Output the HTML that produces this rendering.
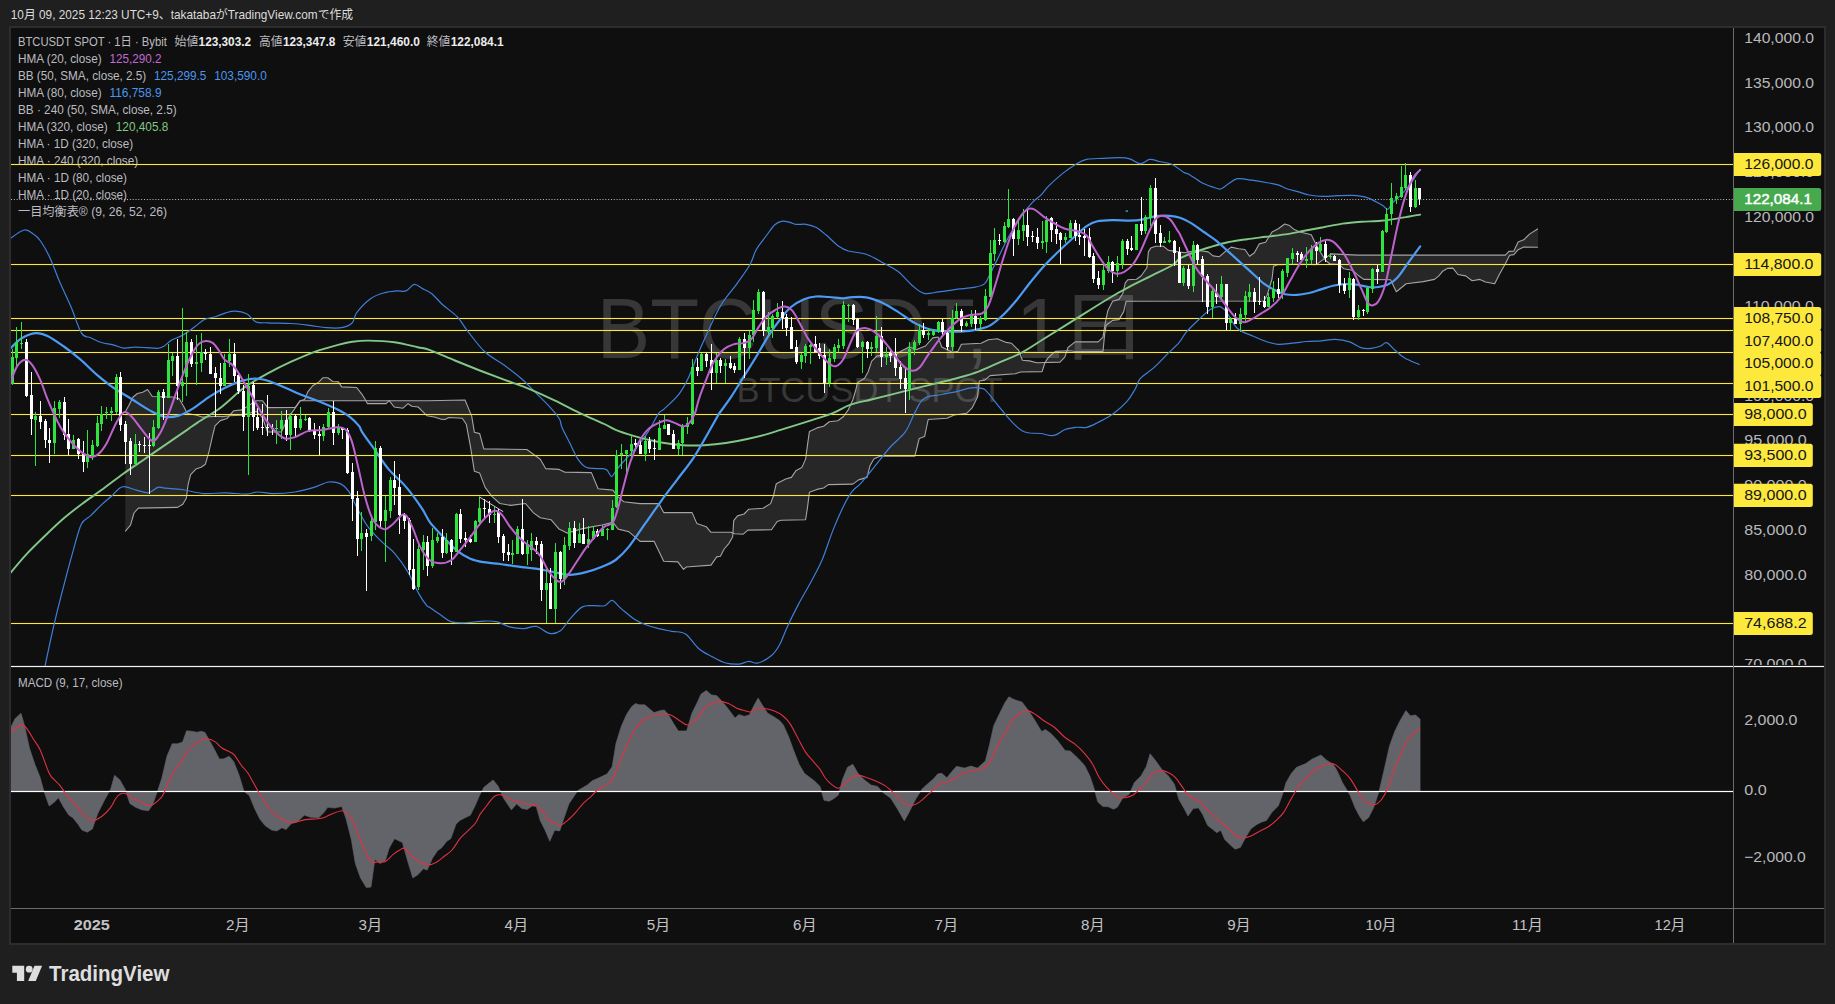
<!DOCTYPE html>
<html lang="ja"><head><meta charset="utf-8"><title>BTCUSDT SPOT 1日 Bybit</title>
<style>
html,body{margin:0;padding:0;background:#1f1f1f;}
body{width:1835px;height:1004px;overflow:hidden;font-family:"Liberation Sans","Noto Sans CJK JP",sans-serif;}
svg{display:block}
text{font-family:"Liberation Sans","Noto Sans CJK JP",sans-serif;}
</style></head><body>
<svg width="1835" height="1004" viewBox="0 0 1835 1004">
<rect width="1835" height="1004" fill="#1f1f1f"/>
<rect x="9" y="26" width="1817" height="919" fill="#2d2d2d"/>
<rect x="11" y="28" width="1813" height="915" fill="#0f0f0f"/>
<defs>
<clipPath id="cpMain"><rect x="11" y="28" width="1722.5" height="638.0"/></clipPath>
<clipPath id="cpAxis"><rect x="1733.5" y="28" width="90.5" height="637.0"/></clipPath>
<clipPath id="cpMacd"><rect x="11" y="667.0" width="1722.5" height="241.5"/></clipPath>
</defs>

<text x="10.8" y="19.0" font-size="12.4" fill="#dcdcdc" textLength="342.3" lengthAdjust="spacingAndGlyphs" >10月 09, 2025 12:23 UTC+9、takatabaがTradingView.comで作成</text>
<g clip-path="url(#cpMain)">
<text x="596.8" y="358.0" font-size="86" fill="#373737" textLength="391.5" lengthAdjust="spacingAndGlyphs" >BTCUSDT,</text>
<text x="1015.5" y="358.0" font-size="86" fill="#373737" >1</text>
<text transform="translate(1058.9,354.3) scale(1.17,1)" font-size="76" fill="#373737">日</text>
<text x="736.5" y="401.8" font-size="34.3" fill="#373737" textLength="266.0" lengthAdjust="spacingAndGlyphs" >BTCUSDT SPOT</text>
<path d="M125.2,411.9L128.7,405.7L133.1,397.0L137.4,393.5L142.7,392.3L147.6,389.5L152.3,396.5L172.3,397.0L179.3,398.8L183.7,406.6L187.1,413.2L196.7,415.3L202.0,417.1L217.7,416.2L222.5,416.6L230.0,415.7L241.9,415.1L256.4,411.4L262.6,417.6L265.1,425.1L267.6,432.0L281.4,432.0L285.2,423.9L290.2,415.1L296.5,406.3L300.2,400.7L304.6,399.5L307.8,391.9L312.8,385.7L319.0,381.9L322.8,377.8L327.8,377.8L332.8,381.5L338.5,381.9L341.6,386.9L356.6,387.5L361.6,393.8L366.0,400.7L367.3,403.6L386.1,403.6L389.2,400.7L394.2,407.0L403.0,408.2L408.0,403.6L411.8,406.3L418.1,407.0L421.8,410.7L426.8,415.7L434.3,417.0L440.6,419.1L445.0,419.5L448.8,417.5L462.3,418.3L466.3,424.2L470.3,445.7L474.4,471.3L479.7,473.1L485.1,487.4L491.9,496.3L499.9,503.5L510.7,505.4L525.5,503.5L533.5,512.9L540.3,517.8L551.0,519.7L559.1,529.1L567.1,533.1L580.6,529.1L591.4,526.9L602.1,525.0L612.9,522.4L618.2,529.1L629.0,531.8L638.4,539.8L640.0,541.4L654.2,541.4L663.7,561.3L677.9,561.9L683.5,569.4L686.4,567.0L711.0,565.1L716.7,556.9L720.4,556.2L724.2,549.0L729.0,543.3L732.7,536.7L733.7,520.6L737.5,515.9L744.1,514.0L748.8,509.2L763.0,508.3L770.6,503.6L773.4,496.0L776.3,483.7L785.7,479.0L791.4,477.4L796.2,470.4L801.8,467.6L805.6,459.1L807.5,444.9L809.4,431.6L817.0,427.9L823.6,426.3L829.3,421.8L837.8,420.7L843.5,416.5L848.2,409.9L852.9,399.5L855.8,390.0L857.4,382.8L864.6,378.3L868.1,372.0L871.7,361.2L877.1,355.9L884.3,355.0L896.8,354.1L902.2,350.5L909.4,346.9L916.6,349.6L925.5,346.0L932.7,337.9L938.1,337.0L941.7,346.9L952.4,352.3L957.8,351.4L961.4,344.2L981.1,343.3L988.3,339.7L997.3,338.8L1006.2,342.4L1011.6,343.3L1018.8,350.5L1022.4,360.3L1029.5,360.9L1036.7,362.7L1060.0,362.1L1064.8,357.1L1068.0,347.5L1075.1,341.9L1098.2,341.9L1103.0,337.1L1105.4,322.0L1107.8,310.8L1112.6,301.3L1119.0,299.4L1122.9,293.3L1125.3,282.9L1127.7,279.8L1136.5,279.3L1141.3,275.8L1146.9,267.8L1148.4,251.9L1150.8,247.9L1155.6,246.3L1163.6,246.3L1168.4,250.3L1173.9,251.1L1184.3,252.7L1197.1,250.3L1208.2,251.9L1213.0,255.9L1219.4,256.7L1225.7,251.1L1231.3,247.1L1238.5,248.7L1244.9,249.5L1249.6,256.3L1254.4,252.7L1259.2,243.9L1265.6,242.3L1272.0,232.0L1278.3,228.8L1284.7,224.0L1289.5,225.6L1294.3,229.6L1300.0,232.0L1311.3,234.8L1314.8,241.9L1319.8,251.1L1325.4,260.3L1329.7,263.8L1339.6,264.6L1343.8,268.8L1352.3,270.2L1358.0,275.2L1363.7,279.4L1390.6,279.7L1396.3,291.8L1406.2,283.7L1423.2,281.6L1434.5,279.4L1438.8,275.9L1443.0,270.9L1447.3,268.4L1452.9,268.1L1457.9,274.5L1465.7,275.9L1472.1,280.8L1479.9,279.4L1485.5,282.0L1494.7,283.7L1499.7,273.8L1505.4,263.8L1509.6,255.3L1513.9,254.6L1518.1,249.7L1523.8,247.1L1538.0,247.3L1538.0,228.8L1529.5,234.1L1523.8,239.8L1518.1,241.9L1513.9,251.1L1508.9,251.4L1505.4,255.1L1358.0,255.1L1331.1,253.9L1316.2,264.6L1300.0,264.3L1278.3,264.6L1273.5,266.2L1272.0,279.0L1267.2,294.9L1264.0,301.0L1126.1,301.3L1123.7,311.6L1119.0,319.6L1112.6,320.4L1106.2,325.2L1104.6,334.7L1103.0,351.5L1075.9,351.5L1069.0,350.8L1055.5,351.4L1051.0,355.0L1047.5,358.6L1044.8,363.0L1042.1,371.6L1020.6,372.0L1015.2,373.8L990.1,375.6L984.7,380.1L979.3,381.0L977.5,397.1L972.1,407.9L966.8,413.2L954.2,415.0L947.0,418.3L928.2,419.5L924.6,436.6L919.2,438.4L917.5,445.5L914.8,456.3L880.0,456.2L873.8,459.1L870.0,465.7L867.1,477.4L858.6,479.9L852.9,484.1L828.3,484.6L823.6,488.0L817.0,489.4L809.4,492.2L807.5,507.4L805.6,519.7L781.0,520.2L777.2,521.5L771.5,529.7L747.9,530.1L743.2,534.2L734.6,533.8L730.9,532.3L711.0,532.3L706.2,526.7L696.8,523.4L692.1,512.6L663.7,512.6L658.9,503.6L640.0,503.6L623.6,501.7L618.2,496.8L612.9,490.1L598.1,488.7L591.4,472.6L564.5,472.1L559.1,469.4L545.6,468.6L540.3,459.2L526.8,449.5L483.8,448.9L479.7,433.6L474.4,432.3L471.7,416.1L465.0,400.0L428.1,400.7L300.2,400.7L295.2,407.4L267.6,407.6L262.6,400.7L256.4,400.7L241.9,409.9L233.8,410.7L228.8,416.4L227.2,418.5L220.3,420.6L215.0,425.8L212.4,436.3L208.9,452.0L205.4,464.2L201.1,467.3L195.9,469.1L190.6,474.6L188.0,485.1L186.3,498.2L182.8,504.3L177.5,507.4L138.3,508.1L134.0,513.0L130.5,525.2L125.2,531.3Z" fill="#ffffff" fill-opacity="0.10" stroke="none"/>
<path d="M125.2,531.3L130.5,525.2L134.0,513.0L138.3,508.1L177.5,507.4L182.8,504.3L186.3,498.2L188.0,485.1L190.6,474.6L195.9,469.1L201.1,467.3L205.4,464.2L208.9,452.0L212.4,436.3L215.0,425.8L220.3,420.6L227.2,418.5L228.8,416.4L233.8,410.7L241.9,409.9L256.4,400.7L262.6,400.7L267.6,407.6L295.2,407.4L300.2,400.7L428.1,400.7L465.0,400.0L471.7,416.1L474.4,432.3L479.7,433.6L483.8,448.9L526.8,449.5L540.3,459.2L545.6,468.6L559.1,469.4L564.5,472.1L591.4,472.6L598.1,488.7L612.9,490.1L618.2,496.8L623.6,501.7L640.0,503.6L658.9,503.6L663.7,512.6L692.1,512.6L696.8,523.4L706.2,526.7L711.0,532.3L730.9,532.3L734.6,533.8L743.2,534.2L747.9,530.1L771.5,529.7L777.2,521.5L781.0,520.2L805.6,519.7L807.5,507.4L809.4,492.2L817.0,489.4L823.6,488.0L828.3,484.6L852.9,484.1L858.6,479.9L867.1,477.4L870.0,465.7L873.8,459.1L880.0,456.2L914.8,456.3L917.5,445.5L919.2,438.4L924.6,436.6L928.2,419.5L947.0,418.3L954.2,415.0L966.8,413.2L972.1,407.9L977.5,397.1L979.3,381.0L984.7,380.1L990.1,375.6L1015.2,373.8L1020.6,372.0L1042.1,371.6L1044.8,363.0L1047.5,358.6L1051.0,355.0L1055.5,351.4L1069.0,350.8L1075.9,351.5L1103.0,351.5L1104.6,334.7L1106.2,325.2L1112.6,320.4L1119.0,319.6L1123.7,311.6L1126.1,301.3L1264.0,301.0L1267.2,294.9L1272.0,279.0L1273.5,266.2L1278.3,264.6L1300.0,264.3L1316.2,264.6L1331.1,253.9L1358.0,255.1L1505.4,255.1L1508.9,251.4L1513.9,251.1L1518.1,241.9L1523.8,239.8L1529.5,234.1L1538.0,228.8" fill="none" stroke="#a4a4a4" stroke-width="1.1" stroke-linejoin="round"/>
<path d="M125.2,411.9L128.7,405.7L133.1,397.0L137.4,393.5L142.7,392.3L147.6,389.5L152.3,396.5L172.3,397.0L179.3,398.8L183.7,406.6L187.1,413.2L196.7,415.3L202.0,417.1L217.7,416.2L222.5,416.6L230.0,415.7L241.9,415.1L256.4,411.4L262.6,417.6L265.1,425.1L267.6,432.0L281.4,432.0L285.2,423.9L290.2,415.1L296.5,406.3L300.2,400.7L304.6,399.5L307.8,391.9L312.8,385.7L319.0,381.9L322.8,377.8L327.8,377.8L332.8,381.5L338.5,381.9L341.6,386.9L356.6,387.5L361.6,393.8L366.0,400.7L367.3,403.6L386.1,403.6L389.2,400.7L394.2,407.0L403.0,408.2L408.0,403.6L411.8,406.3L418.1,407.0L421.8,410.7L426.8,415.7L434.3,417.0L440.6,419.1L445.0,419.5L448.8,417.5L462.3,418.3L466.3,424.2L470.3,445.7L474.4,471.3L479.7,473.1L485.1,487.4L491.9,496.3L499.9,503.5L510.7,505.4L525.5,503.5L533.5,512.9L540.3,517.8L551.0,519.7L559.1,529.1L567.1,533.1L580.6,529.1L591.4,526.9L602.1,525.0L612.9,522.4L618.2,529.1L629.0,531.8L638.4,539.8L640.0,541.4L654.2,541.4L663.7,561.3L677.9,561.9L683.5,569.4L686.4,567.0L711.0,565.1L716.7,556.9L720.4,556.2L724.2,549.0L729.0,543.3L732.7,536.7L733.7,520.6L737.5,515.9L744.1,514.0L748.8,509.2L763.0,508.3L770.6,503.6L773.4,496.0L776.3,483.7L785.7,479.0L791.4,477.4L796.2,470.4L801.8,467.6L805.6,459.1L807.5,444.9L809.4,431.6L817.0,427.9L823.6,426.3L829.3,421.8L837.8,420.7L843.5,416.5L848.2,409.9L852.9,399.5L855.8,390.0L857.4,382.8L864.6,378.3L868.1,372.0L871.7,361.2L877.1,355.9L884.3,355.0L896.8,354.1L902.2,350.5L909.4,346.9L916.6,349.6L925.5,346.0L932.7,337.9L938.1,337.0L941.7,346.9L952.4,352.3L957.8,351.4L961.4,344.2L981.1,343.3L988.3,339.7L997.3,338.8L1006.2,342.4L1011.6,343.3L1018.8,350.5L1022.4,360.3L1029.5,360.9L1036.7,362.7L1060.0,362.1L1064.8,357.1L1068.0,347.5L1075.1,341.9L1098.2,341.9L1103.0,337.1L1105.4,322.0L1107.8,310.8L1112.6,301.3L1119.0,299.4L1122.9,293.3L1125.3,282.9L1127.7,279.8L1136.5,279.3L1141.3,275.8L1146.9,267.8L1148.4,251.9L1150.8,247.9L1155.6,246.3L1163.6,246.3L1168.4,250.3L1173.9,251.1L1184.3,252.7L1197.1,250.3L1208.2,251.9L1213.0,255.9L1219.4,256.7L1225.7,251.1L1231.3,247.1L1238.5,248.7L1244.9,249.5L1249.6,256.3L1254.4,252.7L1259.2,243.9L1265.6,242.3L1272.0,232.0L1278.3,228.8L1284.7,224.0L1289.5,225.6L1294.3,229.6L1300.0,232.0L1311.3,234.8L1314.8,241.9L1319.8,251.1L1325.4,260.3L1329.7,263.8L1339.6,264.6L1343.8,268.8L1352.3,270.2L1358.0,275.2L1363.7,279.4L1390.6,279.7L1396.3,291.8L1406.2,283.7L1423.2,281.6L1434.5,279.4L1438.8,275.9L1443.0,270.9L1447.3,268.4L1452.9,268.1L1457.9,274.5L1465.7,275.9L1472.1,280.8L1479.9,279.4L1485.5,282.0L1494.7,283.7L1499.7,273.8L1505.4,263.8L1509.6,255.3L1513.9,254.6L1518.1,249.7L1523.8,247.1L1538.0,247.3" fill="none" stroke="#a4a4a4" stroke-width="1.1" stroke-linejoin="round"/>
<text x="18.0" y="45.8" font-size="12.4" fill="#bcbcc0" textLength="148.8" lengthAdjust="spacingAndGlyphs" >BTCUSDT SPOT · 1日 · Bybit</text>
<text x="174.6" y="45.8" font-size="12.4" fill="#bcbcc0" textLength="23.7" lengthAdjust="spacingAndGlyphs" >始値</text><text x="198.6" y="45.8" font-size="12.4" fill="#ececec" textLength="52.5" lengthAdjust="spacingAndGlyphs" font-weight="bold" >123,303.2</text>
<text x="259.0" y="45.8" font-size="12.4" fill="#bcbcc0" textLength="23.6" lengthAdjust="spacingAndGlyphs" >高値</text><text x="282.9" y="45.8" font-size="12.4" fill="#ececec" textLength="52.5" lengthAdjust="spacingAndGlyphs" font-weight="bold" >123,347.8</text>
<text x="342.7" y="45.8" font-size="12.4" fill="#bcbcc0" textLength="23.8" lengthAdjust="spacingAndGlyphs" >安値</text><text x="366.8" y="45.8" font-size="12.4" fill="#ececec" textLength="53.1" lengthAdjust="spacingAndGlyphs" font-weight="bold" >121,460.0</text>
<text x="426.7" y="45.8" font-size="12.4" fill="#bcbcc0" textLength="23.7" lengthAdjust="spacingAndGlyphs" >終値</text><text x="450.7" y="45.8" font-size="12.4" fill="#ececec" textLength="52.9" lengthAdjust="spacingAndGlyphs" font-weight="bold" >122,084.1</text>
<text x="18.0" y="62.8" font-size="12.4" fill="#bcbcc0" textLength="83.6" lengthAdjust="spacingAndGlyphs" >HMA (20, close)</text>
<text x="109.5" y="62.8" font-size="12.4" fill="#c06ad0" textLength="52.0" lengthAdjust="spacingAndGlyphs" >125,290.2</text>
<text x="18.0" y="79.8" font-size="12.4" fill="#bcbcc0" textLength="128.2" lengthAdjust="spacingAndGlyphs" >BB (50, SMA, close, 2.5)</text>
<text x="154.0" y="79.8" font-size="12.4" fill="#4c96ee" textLength="52.4" lengthAdjust="spacingAndGlyphs" >125,299.5</text>
<text x="214.2" y="79.8" font-size="12.4" fill="#4c96ee" textLength="52.6" lengthAdjust="spacingAndGlyphs" >103,590.0</text>
<text x="18.0" y="96.8" font-size="12.4" fill="#bcbcc0" textLength="83.6" lengthAdjust="spacingAndGlyphs" >HMA (80, close)</text>
<text x="109.5" y="96.8" font-size="12.4" fill="#4c96ee" textLength="52.0" lengthAdjust="spacingAndGlyphs" >116,758.9</text>
<text x="18.0" y="113.8" font-size="12.4" fill="#bcbcc0" textLength="158.6" lengthAdjust="spacingAndGlyphs" >BB · 240 (50, SMA, close, 2.5)</text>
<text x="18.0" y="130.9" font-size="12.4" fill="#bcbcc0" textLength="89.7" lengthAdjust="spacingAndGlyphs" >HMA (320, close)</text>
<text x="115.8" y="130.9" font-size="12.4" fill="#7fc883" textLength="52.5" lengthAdjust="spacingAndGlyphs" >120,405.8</text>
<text x="18.0" y="147.9" font-size="12.4" fill="#bcbcc0" textLength="115.1" lengthAdjust="spacingAndGlyphs" >HMA · 1D (320, close)</text>
<text x="18.0" y="164.9" font-size="12.4" fill="#bcbcc0" textLength="120.2" lengthAdjust="spacingAndGlyphs" >HMA · 240 (320, close)</text>
<text x="18.0" y="182.0" font-size="12.4" fill="#bcbcc0" textLength="109.0" lengthAdjust="spacingAndGlyphs" >HMA · 1D (80, close)</text>
<text x="18.0" y="199.0" font-size="12.4" fill="#bcbcc0" textLength="109.0" lengthAdjust="spacingAndGlyphs" >HMA · 1D (20, close)</text>
<text x="18.0" y="216.0" font-size="12.4" fill="#bcbcc0" textLength="149.0" lengthAdjust="spacingAndGlyphs" >一目均衡表® (9, 26, 52, 26)</text>
<rect x="11" y="163.95" width="1722.5" height="1.1" fill="#fce83a"/>
<rect x="11" y="263.95" width="1722.5" height="1.1" fill="#fce83a"/>
<rect x="11" y="317.95" width="1722.5" height="1.1" fill="#fce83a"/>
<rect x="11" y="329.95" width="1722.5" height="1.1" fill="#fce83a"/>
<rect x="11" y="351.95" width="1722.5" height="1.1" fill="#fce83a"/>
<rect x="11" y="382.95" width="1722.5" height="1.1" fill="#fce83a"/>
<rect x="11" y="413.95" width="1722.5" height="1.1" fill="#fce83a"/>
<rect x="11" y="454.95" width="1722.5" height="1.1" fill="#fce83a"/>
<rect x="11" y="494.95" width="1722.5" height="1.1" fill="#fce83a"/>
<rect x="11" y="622.95" width="1722.5" height="1.1" fill="#fce83a"/>
<line x1="11" y1="199.5" x2="1733.5" y2="199.5" stroke="#bdbdbd" stroke-width="1" stroke-dasharray="1,1.83"/>
<path d="M10.0,238.7C12.3,237.2 20.2,230.8 24.1,230.0C28.0,229.2 30.7,232.1 33.4,234.0C36.2,235.8 37.7,237.1 40.5,241.0C43.2,244.9 46.7,250.8 49.8,257.4C53.0,264.1 55.7,272.6 59.2,280.8C62.7,289.0 67.2,297.9 70.9,306.6C74.6,315.3 78.2,327.9 81.5,333.1C84.8,338.3 87.5,336.2 90.8,337.8C94.2,339.3 97.7,341.3 101.4,342.5C105.1,343.6 109.4,343.9 113.1,344.8C116.8,345.8 120.1,347.7 123.7,348.1C127.2,348.5 130.5,347.2 134.2,347.2C137.9,347.1 142.0,347.4 145.9,347.6C149.8,347.8 154.7,348.5 157.6,348.3C160.6,348.1 161.1,347.8 163.5,346.5C165.8,345.1 168.4,342.1 171.7,340.1C175.0,338.2 179.5,337.0 183.4,334.7C187.3,332.5 191.6,329.1 195.1,326.5C198.6,324.0 201.0,321.2 204.5,319.5C208.0,317.8 212.7,317.6 216.2,316.5C219.7,315.4 222.5,313.8 225.6,312.9C228.7,312.0 231.4,311.0 235.0,311.1C238.5,311.2 243.2,311.9 246.7,313.7C250.2,315.4 252.5,320.3 256.0,321.9C259.6,323.4 261.9,322.5 267.8,322.8C273.6,323.1 284.2,323.1 291.2,323.5C298.2,323.9 304.1,324.7 309.9,325.4C315.8,326.1 321.1,327.3 326.3,327.7C331.6,328.1 337.3,328.5 341.6,327.7C345.9,326.9 349.6,325.6 352.1,323.0C354.7,320.5 353.7,316.6 356.8,312.5C359.9,308.4 366.2,301.7 370.9,298.4C375.6,295.1 380.6,293.8 384.9,292.6C389.2,291.3 393.1,291.2 396.6,290.9C400.2,290.6 403.1,292.0 406.0,290.9C409.0,289.8 411.5,284.8 414.2,284.4C417.0,284.0 419.5,287.0 422.4,288.6C425.4,290.1 428.5,291.1 431.8,293.7C435.1,296.4 438.2,300.6 442.4,304.5C446.7,308.4 453.2,312.6 457.4,316.9C461.5,321.3 462.8,324.8 467.3,330.6C471.9,336.4 478.6,346.0 484.8,351.8C491.0,357.6 498.5,360.9 504.7,365.5C510.9,370.1 517.1,374.8 522.1,379.2C527.1,383.5 530.0,387.1 534.6,391.6C539.1,396.2 545.4,402.0 549.5,406.6C553.7,411.1 557.4,415.6 559.5,419.0C561.5,422.4 560.0,422.9 561.8,426.9C563.5,430.9 567.1,437.6 569.8,443.0C572.5,448.4 575.2,455.1 577.9,459.2C580.6,463.2 582.8,465.7 586.0,467.2C589.1,468.8 593.4,468.2 596.7,468.6C600.1,468.9 603.7,468.0 606.1,469.4C608.6,470.7 610.0,476.3 611.5,476.6C613.1,477.0 614.0,473.3 615.6,471.3C617.1,469.2 617.8,468.1 620.9,464.5C624.1,461.0 629.9,455.1 634.4,449.7C638.9,444.4 643.8,438.3 647.8,432.3C651.9,426.2 655.9,417.3 658.6,413.4C661.3,409.6 660.6,412.3 664.0,409.1C667.4,405.8 674.8,399.5 679.0,394.1C683.1,388.7 685.6,383.8 688.9,376.7C692.3,369.6 695.6,359.7 698.9,351.8C702.2,343.9 705.1,337.3 708.9,329.4C712.6,321.5 716.7,312.0 721.3,304.5C725.9,297.0 731.5,291.2 736.3,284.6C741.0,277.9 746.6,270.5 749.9,264.7C753.3,258.8 753.5,254.5 756.2,249.7C758.9,244.9 763.0,240.2 766.1,236.0C769.2,231.9 772.1,227.3 774.8,224.8C777.5,222.3 779.8,221.5 782.3,221.1C784.8,220.7 787.5,221.8 789.8,222.3C792.1,222.9 793.3,224.0 796.0,224.3C798.7,224.7 802.7,223.8 806.0,224.3C809.3,224.8 812.6,225.6 815.9,227.3C819.2,229.1 822.2,231.7 825.9,234.8C829.6,237.9 834.6,243.3 838.3,246.0C842.1,248.7 843.7,249.6 848.3,251.0C852.9,252.3 860.5,252.4 866.1,254.3C871.8,256.2 876.9,259.4 882.3,262.4C887.6,265.3 893.5,268.0 898.4,271.8C903.3,275.6 907.6,281.6 911.9,285.2C916.1,288.8 919.5,292.2 924.0,293.3C928.4,294.4 933.1,292.6 938.7,291.9C944.3,291.3 951.7,290.0 957.6,289.2C963.4,288.5 969.2,288.3 973.7,287.4C978.2,286.5 981.8,286.0 984.5,283.9C987.1,281.7 987.6,278.7 989.8,274.5C992.1,270.2 994.8,264.6 997.9,258.3C1001.0,252.0 1004.6,244.0 1008.7,236.8C1012.7,229.6 1018.1,221.1 1022.1,215.3C1026.1,209.5 1029.7,205.2 1032.9,201.9C1036.0,198.5 1038.2,197.8 1040.9,195.1C1043.6,192.4 1045.4,189.3 1049.0,185.7C1052.6,182.1 1058.0,177.2 1062.4,173.6C1066.9,170.0 1071.9,166.6 1075.9,164.2C1079.9,161.8 1082.2,160.3 1086.6,159.4C1091.1,158.4 1097.4,158.6 1102.8,158.3C1108.2,158.0 1114.4,157.7 1118.9,157.7C1123.4,157.8 1126.1,157.8 1129.7,158.8C1133.3,159.8 1137.1,163.6 1140.4,163.7C1143.8,163.8 1146.7,159.7 1149.8,159.4C1153.0,159.0 1155.4,160.6 1159.3,161.5C1163.1,162.4 1168.7,162.9 1172.7,164.7C1176.7,166.5 1180.6,170.6 1183.5,172.3C1186.3,173.9 1186.6,172.9 1189.6,174.7C1192.6,176.4 1197.5,180.4 1201.5,182.5C1205.5,184.7 1210.3,186.2 1213.5,187.3C1216.6,188.4 1218.2,189.5 1220.6,189.0C1223.0,188.5 1225.0,185.9 1227.8,184.2C1230.6,182.5 1233.4,179.4 1237.4,178.7C1241.3,178.0 1246.9,179.5 1251.7,180.2C1256.5,180.8 1261.7,181.7 1266.0,182.5C1270.4,183.3 1274.4,183.9 1278.0,184.9C1281.6,186.0 1284.0,187.8 1287.5,189.0C1291.1,190.2 1295.9,191.1 1299.5,192.1C1303.1,193.1 1305.1,194.3 1309.1,195.0C1313.0,195.7 1318.6,196.3 1323.4,196.4C1328.2,196.5 1333.0,195.8 1337.7,195.7C1342.5,195.5 1347.3,195.2 1352.1,195.4C1356.9,195.7 1362.4,196.3 1366.4,197.4C1370.4,198.4 1373.2,200.3 1376.0,201.7C1378.8,203.1 1381.2,204.4 1383.1,205.7C1385.1,207.0 1386.3,209.8 1387.9,209.3C1389.5,208.8 1390.7,204.8 1392.7,202.6C1394.7,200.4 1397.1,199.0 1399.9,196.2C1402.7,193.3 1406.0,189.9 1409.4,185.4C1412.8,180.9 1418.4,171.9 1420.2,169.2" fill="none" stroke="#3f7fd9" stroke-width="1.2"/>
<path d="M45.0,666.2C46.5,659.1 51.2,636.6 54.4,623.2C57.5,609.8 60.6,597.7 63.8,585.6C66.9,573.5 70.3,560.8 73.2,550.6C76.1,540.4 78.4,530.1 81.3,524.2C84.2,518.4 87.3,518.9 90.7,515.6C94.0,512.4 97.8,508.2 101.4,504.9C105.0,501.5 109.3,498.2 112.2,495.5C115.1,492.8 116.9,490.2 118.9,488.7C120.9,487.3 121.4,486.4 124.3,486.6C127.2,486.8 132.4,489.1 136.4,490.1C140.4,491.1 144.9,493.2 148.5,492.8C152.1,492.3 155.0,488.2 157.9,487.4C160.8,486.6 161.9,487.8 166.0,488.2C170.0,488.6 175.8,488.7 182.1,489.5C188.4,490.4 196.4,493.0 203.6,493.6C210.8,494.1 218.0,492.7 225.1,492.8C232.3,492.9 241.3,494.3 246.6,494.1C252.0,494.0 252.9,492.1 257.4,492.0C261.9,491.9 267.3,493.6 273.5,493.6C279.8,493.6 288.3,493.0 295.1,492.0C301.8,490.9 308.3,489.1 313.9,487.4C319.5,485.7 324.2,482.6 328.7,482.0C333.1,481.4 337.4,482.3 340.8,483.9C344.1,485.5 346.1,487.5 348.8,491.4C351.5,495.4 353.8,501.7 356.9,507.6C360.0,513.4 363.6,520.8 367.7,526.4C371.7,532.0 376.6,536.7 381.1,541.2C385.6,545.7 390.1,548.1 394.6,553.3C399.0,558.4 404.0,565.4 408.0,572.1C412.0,578.8 415.6,588.0 418.8,593.6C421.9,599.2 424.9,603.4 426.8,605.7C428.7,608.1 427.7,606.0 430.0,607.6C432.3,609.2 437.2,612.8 440.8,615.1C444.3,617.5 447.0,620.6 451.5,621.9C456.0,623.1 462.3,622.8 467.6,622.7C473.0,622.5 478.9,621.2 483.8,621.1C488.7,620.9 492.7,620.8 497.2,621.9C501.7,622.9 506.2,626.1 510.7,627.2C515.2,628.4 519.9,628.7 524.1,628.6C528.4,628.4 532.0,625.6 536.2,626.4C540.5,627.2 545.6,632.7 549.7,633.4C553.7,634.1 557.1,633.1 560.4,630.7C563.8,628.4 566.3,623.1 569.8,619.2C573.4,615.2 577.9,609.3 581.9,607.1C586.0,604.8 590.2,605.9 594.0,605.7C597.8,605.5 601.8,606.6 604.8,605.7C607.8,604.8 609.4,599.9 612.1,600.3C614.7,600.8 617.2,605.3 620.9,608.4C624.7,611.5 630.3,616.5 634.4,619.2C638.4,621.9 641.1,623.0 645.1,624.5C649.2,626.1 654.1,627.5 658.6,628.6C663.1,629.7 667.5,630.4 672.0,631.3C676.5,632.2 681.0,631.0 685.5,634.0C690.0,636.9 694.4,644.9 698.9,648.7C703.4,652.6 707.9,654.4 712.4,656.8C716.8,659.2 721.3,661.8 725.8,663.0C730.3,664.2 735.4,664.3 739.3,664.1C743.1,663.8 745.5,661.6 748.7,661.4C751.8,661.2 754.3,664.0 758.1,663.0C761.9,662.0 767.9,658.5 771.5,655.5C775.1,652.4 776.9,649.6 779.6,644.7C782.3,639.8 784.5,632.6 787.7,625.9C790.8,619.2 794.4,612.0 798.4,604.4C802.5,596.8 807.8,587.8 811.9,580.2C815.9,572.6 819.0,567.2 822.6,558.7C826.2,550.1 829.8,538.0 833.4,529.1C837.0,520.1 841.0,511.2 844.1,504.9C847.3,498.6 849.4,495.0 852.2,491.4C855.0,487.8 857.1,487.3 860.8,483.3C864.4,479.2 869.3,473.2 874.2,467.1C879.1,461.1 885.2,452.8 890.3,447.0C895.5,441.2 901.1,437.8 905.1,432.2C909.2,426.6 911.4,419.0 914.5,413.4C917.7,407.8 919.5,401.7 924.0,398.6C928.4,395.4 935.8,395.8 941.4,394.5C947.0,393.3 952.6,392.4 957.6,391.3C962.5,390.2 967.0,388.3 971.0,387.8C975.0,387.3 979.1,387.7 981.8,388.4C984.5,389.0 984.5,389.0 987.1,391.9C989.8,394.7 993.9,400.4 997.9,405.3C1001.9,410.2 1007.3,417.2 1011.4,421.4C1015.4,425.7 1019.0,428.9 1022.1,430.8C1025.2,432.8 1027.0,432.5 1030.2,433.0C1033.3,433.4 1037.8,433.1 1040.9,433.5C1044.1,433.9 1046.5,435.2 1049.0,435.4C1051.5,435.6 1053.0,435.9 1055.7,434.9C1058.4,433.9 1061.8,430.8 1065.1,429.5C1068.5,428.2 1072.3,427.7 1075.9,427.3C1079.5,427.0 1083.1,428.1 1086.6,427.3C1090.2,426.6 1092.9,425.1 1097.4,422.8C1101.9,420.4 1108.6,417.0 1113.5,413.4C1118.5,409.8 1123.4,405.3 1127.0,401.3C1130.6,397.2 1132.8,393.0 1135.1,389.2C1137.3,385.4 1137.3,382.0 1140.4,378.4C1143.6,374.8 1149.4,371.7 1153.9,367.6C1158.4,363.6 1163.1,358.5 1167.3,354.2C1171.6,349.9 1176.3,345.8 1179.4,342.1C1182.6,338.4 1182.8,336.2 1186.1,332.3C1189.5,328.4 1195.6,322.6 1199.6,318.8C1203.6,315.0 1207.0,311.4 1210.4,309.4C1213.7,307.4 1217.1,306.3 1219.8,306.7C1222.5,307.2 1223.6,308.5 1226.5,312.1C1229.4,315.7 1232.8,324.2 1237.2,328.2C1241.7,332.3 1248.4,334.1 1253.4,336.3C1258.3,338.6 1262.7,340.4 1266.8,341.7C1270.9,343.0 1273.7,344.1 1278.0,344.3C1282.2,344.6 1287.5,343.6 1292.3,343.1C1297.1,342.7 1301.9,341.9 1306.7,341.5C1311.4,341.1 1316.2,341.1 1321.0,340.8C1325.8,340.4 1330.6,339.1 1335.3,339.3C1340.1,339.5 1345.3,340.5 1349.7,341.9C1354.1,343.4 1358.1,346.8 1361.6,347.9C1365.2,349.0 1368.0,348.7 1371.2,348.4C1374.4,348.1 1378.2,347.0 1380.8,346.0C1383.3,345.1 1384.3,341.9 1386.7,342.7C1389.1,343.4 1392.1,347.8 1395.1,350.3C1398.1,352.9 1400.6,355.6 1404.7,358.0C1408.8,360.4 1417.2,363.5 1419.7,364.7" fill="none" stroke="#3f7fd9" stroke-width="1.2"/>
<path d="M10.0,573.5C12.7,570.3 20.3,560.9 26.1,554.6C32.0,548.4 38.7,541.9 45.0,535.8C51.2,529.8 57.5,523.7 63.8,518.3C70.1,512.9 76.3,508.2 82.6,503.5C88.9,498.8 94.7,495.0 101.4,490.1C108.2,485.2 115.8,479.1 122.9,474.0C130.1,468.8 137.3,464.1 144.5,459.2C151.6,454.2 158.8,449.3 166.0,444.4C173.1,439.4 182.2,433.2 187.5,429.6C192.7,426.0 191.9,426.3 197.5,422.6C203.0,418.9 213.1,413.2 220.9,407.4C228.7,401.5 236.5,393.1 244.3,387.5C252.1,381.8 260.0,377.7 267.8,373.4C275.6,369.1 283.4,365.3 291.2,361.7C299.0,358.1 306.8,354.7 314.6,351.8C322.4,349.0 331.8,346.5 338.1,344.8C344.3,343.1 347.0,342.5 352.1,341.8C357.2,341.1 361.5,340.5 368.5,340.6C375.6,340.7 386.1,341.1 394.3,342.2C402.5,343.3 411.8,345.9 417.7,347.2C423.7,348.5 423.8,347.8 430.0,350.1C436.2,352.3 446.6,357.1 454.9,360.5C463.2,363.9 471.5,367.2 479.8,370.5C488.1,373.7 496.4,376.8 504.7,379.9C513.0,383.0 521.3,385.7 529.6,389.1C537.9,392.6 546.2,396.4 554.5,400.4C562.8,404.3 571.1,408.9 579.4,412.8C587.7,416.7 597.8,421.0 604.3,424.0C610.8,427.0 612.3,428.7 618.2,430.9C624.2,433.2 632.6,435.7 639.8,437.6C646.9,439.6 654.1,441.2 661.3,442.5C668.4,443.7 675.6,444.7 682.8,445.2C690.0,445.6 697.1,445.5 704.3,445.2C711.5,444.8 718.6,444.1 725.8,443.0C733.0,442.0 740.2,440.6 747.3,439.0C754.5,437.4 761.7,435.6 768.8,433.6C776.0,431.6 783.2,429.1 790.4,426.9C797.5,424.7 804.7,422.5 811.9,420.2C819.0,417.8 827.0,415.5 833.4,412.9C839.7,410.4 843.6,407.1 850.0,404.9C856.4,402.7 864.3,401.3 871.5,399.5C878.7,397.7 885.9,395.9 893.0,394.1C900.2,392.3 907.4,390.5 914.5,388.7C921.7,387.0 928.9,385.2 936.1,383.4C943.2,381.6 950.4,380.0 957.6,378.0C964.7,376.0 971.9,374.0 979.1,371.3C986.3,368.6 993.4,365.0 1000.6,361.9C1007.8,358.7 1014.9,356.3 1022.1,352.4C1029.3,348.6 1036.4,343.5 1043.6,339.0C1050.8,334.5 1058.0,330.0 1065.1,325.6C1072.3,321.1 1079.5,316.6 1086.6,312.1C1093.8,307.6 1101.0,302.9 1108.2,298.7C1115.3,294.4 1122.5,290.4 1129.7,286.6C1136.8,282.8 1144.0,279.4 1151.2,275.8C1158.4,272.2 1167.9,268.0 1172.7,265.0C1177.5,262.1 1176.4,260.4 1180.0,258.3C1183.6,256.2 1189.6,254.1 1194.3,252.3C1199.1,250.5 1203.1,249.2 1208.7,247.5C1214.3,245.9 1221.4,243.7 1227.8,242.3C1234.2,240.9 1240.5,240.1 1246.9,239.2C1253.3,238.3 1259.7,237.6 1266.0,236.8C1272.4,236.0 1278.8,235.4 1285.2,234.4C1291.5,233.4 1297.9,232.0 1304.3,230.8C1310.6,229.6 1317.0,228.4 1323.4,227.2C1329.8,226.0 1336.1,224.6 1342.5,223.6C1348.9,222.7 1355.3,222.2 1361.6,221.7C1368.0,221.3 1375.2,221.3 1380.8,220.8C1386.3,220.3 1390.3,219.6 1395.1,218.9C1399.9,218.2 1405.3,217.2 1409.4,216.5C1413.6,215.8 1418.4,214.9 1420.2,214.6" fill="none" stroke="#82c785" stroke-width="1.9" stroke-linecap="round"/>
<path d="M10.0,348.8C12.0,347.0 17.4,340.9 21.7,338.3C26.0,335.6 31.5,333.5 35.8,333.1C40.1,332.7 42.8,333.7 47.5,335.9C52.2,338.1 58.4,342.6 63.9,346.5C69.4,350.4 74.8,354.7 80.3,359.3C85.8,364.0 91.2,369.9 96.7,374.6C102.2,379.3 107.2,383.4 113.1,387.5C119.0,391.6 125.6,395.3 131.9,399.2C138.1,403.1 145.1,408.0 150.6,410.9C156.1,413.8 160.0,416.0 164.7,416.8C169.3,417.5 174.0,417.0 178.7,415.6C183.4,414.2 187.7,411.7 192.8,408.6C197.9,405.4 203.7,400.4 209.2,396.8C214.7,393.3 220.5,390.0 225.6,387.5C230.7,384.9 235.0,383.1 239.6,381.6C244.3,380.1 249.4,378.8 253.7,378.6C258.0,378.3 260.7,378.7 265.4,380.0C270.1,381.3 276.0,383.9 281.8,386.3C287.7,388.7 294.3,392.0 300.6,394.5C306.8,397.0 313.1,399.0 319.3,401.5C325.6,404.1 333.0,407.2 338.1,409.7C343.1,412.3 346.3,414.0 349.8,416.8C353.3,419.5 357.1,423.5 359.2,426.1C361.2,428.7 359.5,428.1 362.3,432.3C365.0,436.4 371.2,444.8 375.7,451.1C380.2,457.4 384.2,464.1 389.2,469.9C394.1,475.7 399.9,479.8 405.3,486.1C410.7,492.3 417.3,501.5 421.4,507.6C425.6,513.6 426.3,517.4 430.0,522.4C433.7,527.3 439.0,532.4 443.4,537.1C447.9,541.9 452.4,547.0 456.9,550.6C461.4,554.2 465.9,556.7 470.3,558.7C474.8,560.6 478.9,561.3 483.8,562.2C488.7,563.1 494.1,563.3 499.9,564.0C505.7,564.8 512.5,565.9 518.7,566.7C525.0,567.5 531.7,568.0 537.6,568.9C543.4,569.8 548.3,571.1 553.7,572.1C559.1,573.1 564.5,574.8 569.8,574.8C575.2,574.8 580.6,573.5 586.0,572.1C591.4,570.8 597.2,568.7 602.1,566.7C607.0,564.7 611.1,563.4 615.6,560.0C620.0,556.6 624.1,552.6 629.0,546.6C633.9,540.5 639.8,531.3 645.1,523.7C650.5,516.1 655.9,508.2 661.3,500.8C666.6,493.4 672.0,486.5 677.4,479.3C682.8,472.2 688.6,465.2 693.5,457.8C698.5,450.4 703.0,441.9 707.0,435.0C711.0,428.0 715.8,419.6 717.7,416.1C719.7,412.6 716.6,417.3 718.8,414.0C721.1,410.8 727.1,402.8 731.3,396.6C735.4,390.4 739.6,383.3 743.7,376.7C747.9,370.1 752.0,363.6 756.2,356.8C760.3,349.9 764.5,342.0 768.6,335.6C772.8,329.2 777.3,323.0 781.1,318.2C784.8,313.4 787.3,310.1 791.0,307.0C794.8,303.9 799.3,301.3 803.5,299.5C807.6,297.8 811.8,296.9 815.9,296.5C820.1,296.1 823.8,296.7 828.4,297.0C832.9,297.3 839.7,298.2 843.3,298.3C846.9,298.3 846.2,297.5 850.0,297.3C853.8,297.2 860.8,296.4 866.1,297.3C871.5,298.2 876.9,300.2 882.3,302.7C887.6,305.2 893.0,308.7 898.4,312.1C903.8,315.5 909.2,320.0 914.5,322.9C919.9,325.8 925.3,328.2 930.7,329.6C936.1,331.0 941.4,331.2 946.8,331.5C952.2,331.8 958.0,331.8 962.9,331.5C967.9,331.2 971.9,330.6 976.4,329.6C980.9,328.6 985.4,328.0 989.8,325.6C994.3,323.1 998.8,319.1 1003.3,314.8C1007.8,310.5 1012.2,305.4 1016.7,300.0C1021.2,294.6 1025.7,288.1 1030.2,282.5C1034.7,276.9 1038.7,271.8 1043.6,266.4C1048.6,261.0 1054.4,255.4 1059.8,250.3C1065.1,245.1 1071.4,239.5 1075.9,235.5C1080.4,231.4 1083.1,228.4 1086.6,226.1C1090.2,223.7 1092.9,222.2 1097.4,221.2C1101.9,220.2 1108.2,220.2 1113.5,220.1C1118.9,220.0 1124.7,220.8 1129.7,220.7C1134.6,220.5 1138.6,220.1 1143.1,219.3C1147.6,218.6 1152.1,216.7 1156.6,216.1C1161.0,215.5 1166.1,215.6 1170.0,215.8C1173.9,216.1 1176.3,216.4 1180.0,217.7C1183.7,219.0 1188.0,221.3 1191.9,223.6C1195.9,226.0 1199.9,229.2 1203.9,232.0C1207.9,234.8 1211.9,237.2 1215.8,240.4C1219.8,243.6 1223.8,247.5 1227.8,251.1C1231.8,254.7 1235.8,258.3 1239.7,261.9C1243.7,265.5 1247.7,269.1 1251.7,272.6C1255.7,276.2 1259.7,280.4 1263.6,283.4C1267.6,286.4 1272.0,288.8 1275.6,290.6C1279.2,292.4 1281.6,293.4 1285.2,294.2C1288.7,294.9 1293.1,295.1 1297.1,294.9C1301.1,294.7 1305.1,293.9 1309.1,293.0C1313.0,292.0 1317.0,290.6 1321.0,289.4C1325.0,288.2 1329.0,286.7 1333.0,285.8C1336.9,284.9 1340.9,284.3 1344.9,284.1C1348.9,283.9 1352.9,284.1 1356.9,284.6C1360.8,285.1 1365.2,286.6 1368.8,287.0C1372.4,287.4 1375.2,287.4 1378.4,287.0C1381.6,286.6 1384.7,286.2 1387.9,284.6C1391.1,283.0 1394.3,280.8 1397.5,277.4C1400.7,274.0 1403.3,269.5 1407.0,264.3C1410.8,259.1 1418.0,249.3 1420.2,246.4" fill="none" stroke="#4c9bf5" stroke-width="2.2" stroke-linecap="round"/>
<path d="M26.5,339.2V397.2M31.5,371.5V435.1M40.5,401.2V428.7M45.5,419.1V448.1M49.5,428.1V463.1M64.5,397.2V439.6M68.5,419.1V455.0M78.5,438.1V459.0M83.5,441.1V472.0M120.5,372.2V430.8M125.5,421.2V464.3M130.5,438.1V474.7M139.5,440.6V452.0M144.5,437.1V453.1M149.5,432.9V493.9M163.5,389.2V420.0M177.5,339.2V399.9M191.5,339.2V366.8M205.5,349.0V359.8M210.5,347.1V374.0M215.5,367.3V416.6M220.5,362.5V393.9M234.5,343.2V382.3M238.5,372.6V393.5M243.5,384.5V430.9M253.5,381.6V430.9M257.5,407.7V430.4M262.5,404.0V434.6M267.5,395.0V435.8M272.5,424.2V434.6M286.5,410.3V441.3M295.5,414.4V437.6M309.5,416.7V431.6M314.5,423.1V438.8M319.5,426.4V454.8M333.5,401.4V444.8M342.5,427.1V438.8M347.5,427.7V473.6M352.5,463.2V520.7M357.5,491.1V555.8M366.5,529.2V590.9M380.5,446.3V526.7M394.5,461.2V505.0M399.5,474.1V533.9M404.5,513.2V528.9M409.5,517.7V575.3M413.5,538.9V590.0M427.5,536.4V576.0M442.5,529.2V557.8M451.5,538.9V564.8M460.5,509.0V543.1M465.5,531.9V546.9M470.5,534.9V543.1M484.5,499.1V518.9M489.5,501.2V523.0M498.5,508.7V543.1M503.5,534.1V561.0M508.5,544.0V561.0M522.5,499.1V554.7M536.5,536.8V554.0M541.5,541.0V601.1M550.5,567.9V609.3M560.5,551.0V588.8M574.5,521.1V548.0M583.5,518.1V544.0M597.5,529.0V537.1M635.5,438.6V450.9M640.5,437.9V454.3M649.5,437.1V452.8M654.5,438.9V460.3M668.5,423.7V435.3M673.5,429.7V449.1M697.5,358.2V376.1M706.5,352.5V367.1M711.5,344.0V390.3M720.5,357.9V373.1M730.5,355.9V369.4M734.5,363.0V373.1M744.5,333.1V377.9M763.5,290.9V336.1M782.5,301.1V329.0M786.5,314.1V336.1M791.5,317.1V349.2M796.5,339.9V364.2M815.5,335.8V351.9M819.5,342.9V359.2M824.5,344.0V393.3M853.5,304.1V325.0M857.5,318.1V348.0M867.5,340.8V358.0M881.5,327.1V367.0M890.5,350.1V362.0M895.5,338.1V375.9M900.5,361.0V388.9M905.5,368.9V412.8M923.5,323.2V338.1M942.5,319.1V336.0M947.5,331.1V350.1M961.5,309.1V331.8M975.5,310.2V330.1M999.5,234.0V245.0M1013.5,218.1V255.9M1027.5,210.1V245.9M1032.5,231.0V242.0M1037.5,228.0V248.9M1051.5,216.6V242.0M1056.5,222.0V244.0M1060.5,232.0V264.2M1075.5,220.1V241.0M1079.5,224.1V245.0M1084.5,229.0V255.9M1089.5,228.0V257.9M1093.5,252.9V282.8M1098.5,270.9V289.1M1112.5,260.9V282.8M1127.5,239.0V254.9M1131.5,236.1V251.4M1141.5,197.2V235.0M1155.5,178.2V242.9M1160.5,225.0V247.0M1174.5,239.9V265.6M1179.5,247.0V282.8M1188.5,264.9V288.8M1197.5,244.1V264.0M1202.5,255.8V301.8M1207.5,274.0V313.7M1216.5,284.2V303.9M1226.5,283.6V330.2M1235.5,312.5V324.2M1254.5,287.9V312.8M1259.5,277.0V304.8M1264.5,296.1V308.1M1278.5,278.2V298.3M1297.5,251.0V262.0M1301.5,252.0V261.0M1316.5,242.0V264.0M1325.5,241.1V262.0M1334.5,255.0V261.0M1339.5,259.0V293.1M1344.5,278.2V293.9M1353.5,277.9V320.0M1363.5,308.8V315.8M1377.5,264.7V284.2M1410.5,171.7V212.3M1419.5,187.6V205.0" stroke="#ffffff" stroke-width="1" fill="none" shape-rendering="crispEdges"/>
<path d="M25,342.2h3v53.5h-3zM30,394.9h3v24.5h-3zM39,415.7h3v6.0h-3zM44,420.9h3v19.4h-3zM48,440.1h3v2.5h-3zM63,402.1h3v32.6h-3zM67,434.1h3v14.5h-3zM77,439.2h3v14.9h-3zM82,453.5h3v8.1h-3zM119,377.0h3v47.8h-3zM124,423.9h3v17.9h-3zM129,440.6h3v22.9h-3zM138,443.6h3v1.2h-3zM143,444.5h3v1.0h-3zM148,444.5h3v1.2h-3zM162,392.2h3v5.7h-3zM176,356.1h3v29.9h-3zM190,342.2h3v21.4h-3zM204,352.0h3v1.8h-3zM209,353.8h3v19.7h-3zM214,372.9h3v5.5h-3zM219,378.0h3v7.9h-3zM233,353.9h3v21.7h-3zM237,374.8h3v16.4h-3zM242,390.5h3v26.9h-3zM252,385.3h3v32.1h-3zM256,416.7h3v10.8h-3zM261,427.1h3v1.0h-3zM266,427.1h3v1.2h-3zM271,427.9h3v1.0h-3zM285,419.7h3v14.9h-3zM294,415.9h3v12.0h-3zM308,418.2h3v13.2h-3zM313,431.3h3v3.6h-3zM318,434.3h3v1.5h-3zM332,412.2h3v20.6h-3zM341,427.9h3v1.9h-3zM346,429.8h3v43.0h-3zM351,472.1h3v26.5h-3zM356,498.3h3v40.4h-3zM365,533.4h3v3.4h-3zM379,448.2h3v72.5h-3zM393,480.1h3v7.8h-3zM398,487.1h3v27.6h-3zM403,514.7h3v6.0h-3zM408,520.0h3v49.8h-3zM412,569.3h3v19.4h-3zM426,542.1h3v23.5h-3zM441,537.1h3v15.7h-3zM450,540.1h3v11.7h-3zM459,514.0h3v24.7h-3zM464,537.9h3v1.9h-3zM469,539.4h3v2.7h-3zM483,507.6h3v1.5h-3zM488,509.1h3v5.5h-3zM497,511.7h3v25.1h-3zM502,535.7h3v17.2h-3zM507,552.2h3v2.5h-3zM521,529.0h3v25.0h-3zM535,541.0h3v3.7h-3zM540,544.3h3v45.6h-3zM549,583.1h3v25.7h-3zM559,552.2h3v27.2h-3zM573,528.1h3v14.6h-3zM582,534.1h3v9.4h-3zM596,531.1h3v4.9h-3zM634,443.1h3v1.5h-3zM639,444.6h3v9.7h-3zM648,440.9h3v8.2h-3zM653,447.6h3v1.5h-3zM667,424.4h3v10.5h-3zM672,433.9h3v14.9h-3zM696,367.1h3v4.2h-3zM705,353.7h3v7.5h-3zM710,360.0h3v12.9h-3zM719,359.7h3v6.7h-3zM729,363.0h3v4.5h-3zM733,365.9h3v3.9h-3zM743,338.7h3v9.3h-3zM762,292.1h3v39.2h-3zM781,312.1h3v5.4h-3zM785,317.1h3v10.9h-3zM790,327.1h3v21.4h-3zM795,347.0h3v15.4h-3zM814,344.0h3v7.5h-3zM818,347.7h3v8.2h-3zM823,355.2h3v27.6h-3zM852,305.1h3v14.5h-3zM856,319.0h3v27.9h-3zM866,342.0h3v7.0h-3zM880,336.0h3v20.5h-3zM889,353.1h3v2.7h-3zM894,354.0h3v13.7h-3zM899,367.0h3v12.0h-3zM904,378.2h3v10.5h-3zM922,330.4h3v4.5h-3zM941,322.1h3v10.0h-3zM946,332.6h3v14.2h-3zM960,311.2h3v14.6h-3zM974,315.7h3v8.4h-3zM998,239.5h3v1.5h-3zM1012,219.0h3v19.7h-3zM1026,225.0h3v12.0h-3zM1031,235.8h3v1.5h-3zM1036,237.0h3v6.0h-3zM1050,218.1h3v11.7h-3zM1055,229.0h3v4.9h-3zM1059,233.1h3v6.9h-3zM1074,223.1h3v12.7h-3zM1078,235.0h3v1.9h-3zM1083,236.1h3v1.5h-3zM1088,236.5h3v20.5h-3zM1092,255.9h3v22.9h-3zM1097,277.9h3v6.9h-3zM1111,261.9h3v9.0h-3zM1126,241.0h3v8.2h-3zM1130,248.0h3v2.4h-3zM1140,224.1h3v6.9h-3zM1154,187.9h3v46.0h-3zM1159,233.1h3v9.9h-3zM1173,241.0h3v12.0h-3zM1178,251.9h3v30.9h-3zM1187,268.6h3v17.2h-3zM1196,245.3h3v14.9h-3zM1201,259.0h3v17.9h-3zM1206,275.9h3v30.9h-3zM1215,293.1h3v3.7h-3zM1225,283.9h3v38.9h-3zM1234,318.5h3v5.2h-3zM1253,291.9h3v10.2h-3zM1258,300.9h3v1.2h-3zM1263,300.9h3v6.0h-3zM1277,288.9h3v4.9h-3zM1296,253.1h3v1.9h-3zM1300,254.0h3v6.3h-3zM1315,247.1h3v3.9h-3zM1324,244.1h3v13.5h-3zM1333,255.8h3v4.8h-3zM1338,259.9h3v25.0h-3zM1343,283.9h3v6.6h-3zM1352,278.9h3v37.8h-3zM1362,309.6h3v1.2h-3zM1376,269.2h3v2.7h-3zM1409,175.4h3v31.3h-3zM1418,188.1h3v11.3h-3z" fill="#ffffff" stroke="none" shape-rendering="crispEdges"/>
<path d="M12.5,349.3V385.2M16.5,326.9V366.5M21.5,322.1V349.0M35.5,412.0V465.8M54.5,401.2V454.1M59.5,399.9V418.1M73.5,435.1V448.6M87.5,429.9V468.0M92.5,440.1V459.8M97.5,416.1V447.1M101.5,406.0V430.6M106.5,407.0V418.8M111.5,407.0V420.8M116.5,374.0V413.6M135.5,434.1V465.8M153.5,420.2V447.1M158.5,390.1V428.5M168.5,344.1V397.9M172.5,353.1V375.9M182.5,308.2V401.6M186.5,332.2V395.7M196.5,335.1V384.9M201.5,333.2V371.8M224.5,354.1V386.0M229.5,339.0V366.6M248.5,374.1V474.7M276.5,420.0V443.9M281.5,411.2V438.8M290.5,413.4V449.9M300.5,407.3V429.8M305.5,415.2V421.2M323.5,424.2V440.6M328.5,408.0V429.4M338.5,424.2V434.6M361.5,512.2V550.9M371.5,516.2V540.9M375.5,441.2V529.7M385.5,496.0V561.8M390.5,477.1V517.7M418.5,543.1V590.0M423.5,534.9V569.7M432.5,528.2V567.8M437.5,533.0V543.1M446.5,533.0V553.9M456.5,513.2V552.1M475.5,520.4V542.0M479.5,496.7V525.6M494.5,506.6V523.0M512.5,539.8V564.0M517.5,526.0V554.4M527.5,540.1V564.9M531.5,533.1V561.0M546.5,566.7V623.2M555.5,543.1V623.2M564.5,537.1V585.4M569.5,522.1V549.9M579.5,523.0V543.1M588.5,526.0V548.0M593.5,526.0V540.1M602.5,525.1V536.0M607.5,528.1V540.1M612.5,500.2V530.1M616.5,449.8V507.7M621.5,443.9V469.3M626.5,449.8V471.5M631.5,434.5V460.3M645.5,436.4V461.1M659.5,420.0V450.3M664.5,415.0V429.2M678.5,439.8V455.1M682.5,424.0V455.1M687.5,417.0V434.2M692.5,359.4V424.7M701.5,352.9V371.3M716.5,352.9V383.3M725.5,359.2V383.3M739.5,337.0V370.1M749.5,331.0V359.2M753.5,299.9V342.0M758.5,289.1V314.1M768.5,312.1V335.0M772.5,314.1V338.0M777.5,303.2V318.1M801.5,352.9V368.9M805.5,344.0V363.0M810.5,344.0V364.2M829.5,349.2V386.9M834.5,344.0V361.9M838.5,339.0V351.9M843.5,301.1V349.2M848.5,304.1V322.0M862.5,340.8V372.9M871.5,342.0V356.1M876.5,316.2V352.0M886.5,347.1V365.0M909.5,342.0V399.8M914.5,340.1V355.0M919.5,324.1V345.0M928.5,328.1V340.1M933.5,329.2V336.0M938.5,321.1V333.0M952.5,310.2V351.0M956.5,303.2V319.1M966.5,321.1V327.4M971.5,310.2V327.1M980.5,315.7V330.1M985.5,288.8V320.9M990.5,239.9V297.0M994.5,228.0V260.9M1004.5,222.0V242.9M1008.5,189.1V228.0M1018.5,218.1V245.0M1023.5,209.2V241.0M1042.5,221.1V248.9M1046.5,216.0V252.9M1065.5,233.1V242.9M1070.5,220.1V238.0M1103.5,264.5V289.9M1108.5,255.9V273.1M1117.5,255.9V276.9M1122.5,239.0V268.9M1136.5,223.8V250.3M1145.5,215.1V234.0M1150.5,184.9V226.0M1164.5,237.0V243.2M1169.5,231.0V243.2M1183.5,266.4V285.8M1193.5,241.0V291.8M1212.5,287.9V318.2M1221.5,275.9V299.8M1230.5,317.0V330.2M1240.5,308.1V331.7M1245.5,290.9V321.5M1249.5,284.2V301.8M1268.5,293.1V307.3M1273.5,280.9V301.8M1282.5,268.9V298.8M1287.5,257.7V277.0M1292.5,248.0V264.0M1306.5,247.1V268.0M1311.5,245.0V264.0M1320.5,237.1V252.8M1330.5,253.1V259.0M1349.5,271.9V297.9M1358.5,305.1V320.0M1367.5,286.4V314.0M1372.5,267.7V293.1M1382.5,229.5V271.8M1386.5,208.4V232.9M1391.5,183.0V225.3M1396.5,193.1V204.1M1401.5,166.1V198.2M1405.5,162.7V189.8M1415.5,180.1V208.4" stroke="#2ee540" stroke-width="1" fill="none" shape-rendering="crispEdges"/>
<path d="M11,356.8h3v27.6h-3zM15,341.9h3v15.7h-3zM20,342.6h3v1.0h-3zM34,415.7h3v4.5h-3zM53,408.2h3v34.4h-3zM58,402.1h3v7.0h-3zM72,440.4h3v8.2h-3zM86,454.1h3v7.5h-3zM91,444.8h3v10.8h-3zM96,423.2h3v22.4h-3zM100,413.5h3v10.2h-3zM105,411.8h3v1.2h-3zM110,410.9h3v1.9h-3zM115,377.0h3v35.1h-3zM134,444.1h3v19.4h-3zM152,426.9h3v18.7h-3zM157,392.2h3v35.4h-3zM167,360.1h3v37.8h-3zM171,356.1h3v4.8h-3zM181,381.5h3v4.5h-3zM185,342.2h3v34.8h-3zM195,362.0h3v1.9h-3zM200,352.3h3v10.8h-3zM223,363.1h3v22.9h-3zM228,353.9h3v7.5h-3zM247,386.0h3v31.4h-3zM275,427.9h3v1.0h-3zM280,419.7h3v9.0h-3zM289,415.9h3v18.7h-3zM299,418.9h3v9.0h-3zM304,418.5h3v1.0h-3zM322,427.1h3v8.7h-3zM327,411.9h3v15.5h-3zM337,427.4h3v5.4h-3zM360,533.0h3v5.7h-3zM370,521.4h3v14.9h-3zM374,448.2h3v73.7h-3zM384,509.9h3v10.8h-3zM389,480.1h3v30.9h-3zM417,549.1h3v38.1h-3zM422,542.1h3v7.8h-3zM431,539.8h3v26.2h-3zM436,537.1h3v3.7h-3zM445,540.1h3v12.7h-3zM455,514.0h3v37.8h-3zM474,521.1h3v20.5h-3zM478,508.1h3v13.7h-3zM493,514.1h3v1.0h-3zM511,553.2h3v1.5h-3zM516,529.0h3v25.0h-3zM526,544.0h3v9.7h-3zM530,541.0h3v9.3h-3zM545,583.1h3v6.7h-3zM554,552.2h3v56.6h-3zM563,545.0h3v34.4h-3zM568,528.1h3v17.6h-3zM578,534.1h3v8.7h-3zM587,539.0h3v4.5h-3zM592,530.8h3v8.2h-3zM601,529.0h3v6.7h-3zM606,528.7h3v1.0h-3zM611,507.6h3v22.0h-3zM615,454.8h3v52.6h-3zM620,452.8h3v2.2h-3zM625,450.3h3v4.0h-3zM630,444.3h3v6.6h-3zM644,440.9h3v13.5h-3zM658,428.2h3v21.7h-3zM663,424.9h3v4.0h-3zM677,443.1h3v5.7h-3zM681,427.0h3v16.1h-3zM686,422.9h3v4.0h-3zM691,367.1h3v56.8h-3zM700,353.7h3v17.2h-3zM715,360.0h3v12.9h-3zM724,363.4h3v2.5h-3zM738,338.7h3v31.1h-3zM748,335.0h3v12.7h-3zM752,310.1h3v25.0h-3zM757,291.7h3v19.0h-3zM767,326.8h3v4.8h-3zM771,316.0h3v12.3h-3zM776,312.1h3v4.5h-3zM800,354.9h3v7.5h-3zM804,345.9h3v10.0h-3zM809,345.0h3v1.5h-3zM828,358.2h3v24.7h-3zM833,347.0h3v11.5h-3zM837,345.0h3v2.7h-3zM842,304.7h3v41.5h-3zM847,304.7h3v1.2h-3zM861,342.0h3v5.1h-3zM870,347.1h3v1.9h-3zM875,336.0h3v12.0h-3zM885,353.5h3v3.0h-3zM908,349.0h3v39.6h-3zM913,342.0h3v7.8h-3zM918,330.4h3v12.7h-3zM927,333.3h3v1.5h-3zM932,331.1h3v4.0h-3zM937,322.1h3v9.0h-3zM951,317.6h3v29.1h-3zM955,311.2h3v7.2h-3zM965,323.2h3v2.7h-3zM970,315.4h3v8.2h-3zM979,317.6h3v6.4h-3zM984,296.3h3v23.2h-3zM989,252.9h3v44.1h-3zM993,239.9h3v14.0h-3zM1003,226.0h3v15.7h-3zM1007,219.0h3v8.1h-3zM1017,230.1h3v8.7h-3zM1022,225.0h3v6.0h-3zM1041,241.0h3v1.5h-3zM1045,220.1h3v22.0h-3zM1064,237.3h3v2.7h-3zM1069,223.1h3v14.5h-3zM1102,269.8h3v15.2h-3zM1107,261.9h3v9.0h-3zM1116,263.0h3v8.4h-3zM1121,241.0h3v22.9h-3zM1135,224.1h3v25.9h-3zM1144,217.1h3v13.9h-3zM1149,187.9h3v29.9h-3zM1163,241.0h3v1.5h-3zM1168,240.2h3v2.2h-3zM1182,268.3h3v14.5h-3zM1192,244.7h3v41.1h-3zM1211,290.9h3v16.4h-3zM1220,283.9h3v13.0h-3zM1229,318.8h3v4.2h-3zM1239,313.7h3v10.0h-3zM1244,296.1h3v18.7h-3zM1248,291.9h3v4.9h-3zM1267,296.9h3v10.0h-3zM1272,288.6h3v9.3h-3zM1281,271.4h3v21.7h-3zM1286,258.0h3v14.5h-3zM1291,253.1h3v6.0h-3zM1305,258.7h3v1.8h-3zM1310,249.0h3v10.5h-3zM1319,244.1h3v6.9h-3zM1329,255.8h3v1.5h-3zM1348,278.2h3v12.0h-3zM1357,309.9h3v6.9h-3zM1366,287.9h3v23.9h-3zM1371,269.2h3v19.4h-3zM1381,230.9h3v40.6h-3zM1385,213.5h3v18.6h-3zM1390,198.2h3v15.7h-3zM1395,195.7h3v3.7h-3zM1400,187.2h3v9.8h-3zM1404,175.4h3v12.7h-3zM1414,188.1h3v18.6h-3z" fill="#2ee540" stroke="none" shape-rendering="crispEdges"/>
<line x1="479.2" y1="496.8" x2="503.2" y2="511.7" stroke="#d9c9e6" stroke-width="1"/>
<rect x="1125.6" y="210.3" width="2.4" height="1.6" fill="#169fb5"/>
<path d="M10.0,384.0C11.2,381.0 14.5,370.4 17.0,366.4C19.6,362.4 22.7,360.0 25.2,359.8C27.8,359.6 29.7,361.8 32.3,365.2C34.8,368.6 37.9,374.8 40.5,380.4C43.0,386.1 44.8,392.5 47.5,399.2C50.2,405.8 54.2,414.8 56.9,420.3C59.6,425.8 60.4,427.6 63.8,432.3C67.2,437.0 72.7,444.3 77.2,448.4C81.7,452.5 87.1,456.1 90.7,457.0C94.3,457.9 96.1,456.1 98.7,453.8C101.4,451.5 103.9,448.2 106.8,443.0C109.7,437.9 113.3,428.0 116.2,422.9C119.1,417.7 121.6,413.0 124.3,412.1C127.0,411.2 129.4,414.6 132.4,417.5C135.3,420.4 138.4,425.7 141.8,429.6C145.1,433.5 149.4,440.4 152.5,440.9C155.7,441.3 157.9,436.8 160.6,432.3C163.3,427.7 166.0,420.1 168.7,413.4C171.3,406.8 173.9,398.8 176.4,392.2C178.8,385.5 180.9,379.7 183.4,373.4C185.9,367.2 189.1,359.5 191.6,354.7C194.1,349.8 196.3,346.4 198.6,344.1C201.0,341.8 203.3,341.3 205.7,341.1C208.0,340.9 210.5,341.5 212.7,342.9C214.8,344.4 216.6,347.2 218.6,350.0C220.5,352.7 222.3,357.0 224.4,359.3C226.6,361.7 229.3,362.1 231.4,364.0C233.6,366.0 235.2,367.9 237.3,371.1C239.5,374.2 241.6,378.1 244.3,382.8C247.1,387.5 250.6,393.7 253.7,399.2C256.8,404.7 260.0,410.7 263.1,415.6C266.2,420.4 268.7,424.5 272.2,428.2C275.7,432.0 280.5,436.7 284.3,438.2C288.1,439.7 291.0,438.3 295.1,437.1C299.1,435.9 304.0,432.1 308.5,430.9C313.0,429.8 317.5,430.7 321.9,430.1C326.4,429.5 331.6,427.6 335.4,427.4C339.2,427.3 342.1,426.9 344.8,429.0C347.5,431.2 349.3,434.0 351.5,440.3C353.8,446.7 356.0,457.8 358.2,467.2C360.5,476.6 362.5,488.1 365.0,496.8C367.4,505.6 369.9,514.3 373.0,519.7C376.2,525.0 380.7,528.2 383.8,529.1C386.9,530.0 388.5,527.5 391.9,525.0C395.2,522.6 400.6,514.1 404.0,514.3C407.3,514.5 409.3,521.0 412.0,526.4C414.7,531.8 417.2,541.0 420.1,546.6C423.0,552.2 426.1,557.2 429.5,560.0C433.0,562.8 437.1,563.2 440.8,563.2C444.4,563.2 448.4,562.1 451.5,560.0C454.7,557.9 456.4,554.4 459.6,550.6C462.7,546.8 466.8,541.9 470.3,537.1C473.9,532.4 477.7,526.4 481.1,522.4C484.5,518.3 488.0,514.9 490.5,512.9C493.0,511.0 493.9,510.3 495.9,510.8C497.9,511.2 500.1,512.8 502.6,515.6C505.1,518.5 507.5,523.7 510.7,527.7C513.8,531.8 517.8,536.5 521.4,539.8C525.0,543.2 529.1,545.2 532.2,547.9C535.3,550.6 537.6,552.2 540.3,556.0C542.9,559.8 545.6,566.7 548.3,570.8C551.0,574.8 554.2,578.4 556.4,580.2C558.6,582.0 560.0,582.2 561.8,581.5C563.6,580.8 564.9,579.1 567.1,576.1C569.4,573.2 572.1,568.7 575.2,564.0C578.4,559.3 582.4,552.8 586.0,547.9C589.6,543.0 593.6,538.0 596.7,534.5C599.9,530.9 602.1,528.4 604.8,526.4C607.5,524.4 610.6,525.5 612.9,522.4C615.1,519.2 616.4,513.6 618.2,507.6C620.0,501.5 621.6,493.7 623.6,486.1C625.6,478.4 627.9,469.0 630.3,461.9C632.8,454.7 635.5,448.4 638.4,443.0C641.3,437.6 644.5,432.9 647.8,429.6C651.2,426.2 655.4,424.4 658.6,422.9C661.7,421.3 664.0,420.2 666.6,420.2C669.3,420.2 672.0,421.8 674.7,422.9C677.4,423.9 680.3,426.4 682.8,426.4C685.2,426.4 687.5,425.0 689.5,422.9C691.5,420.7 693.3,417.4 694.9,413.4C696.5,409.5 697.0,404.8 698.9,399.1C700.8,393.4 703.9,385.4 706.4,379.2C708.9,373.0 710.9,366.7 713.8,361.8C716.7,356.8 720.5,352.2 723.8,349.3C727.1,346.4 730.4,345.4 733.8,344.3C737.1,343.3 740.8,343.9 743.7,343.1C746.6,342.3 748.7,342.0 751.2,339.4C753.7,336.7 756.2,330.6 758.7,326.9C761.2,323.2 763.2,319.8 766.1,316.9C769.0,314.0 773.0,311.2 776.1,309.5C779.2,307.7 782.1,306.3 784.8,306.5C787.5,306.7 789.8,307.9 792.3,310.7C794.8,313.5 797.0,318.4 799.7,323.2C802.4,327.9 805.3,334.6 808.5,339.4C811.6,344.1 815.1,347.9 818.4,351.8C821.7,355.7 825.5,360.6 828.4,363.0C831.3,365.4 833.4,366.9 835.8,366.2C838.3,365.6 840.8,363.3 843.3,359.3C845.8,355.2 848.6,346.6 850.8,341.8C853.0,337.1 854.2,333.2 856.7,330.9C859.3,328.7 862.8,327.8 866.1,328.2C869.5,328.7 873.3,330.7 876.9,333.6C880.5,336.5 884.1,341.2 887.6,345.7C891.2,350.2 895.3,356.7 898.4,360.5C901.5,364.3 904.0,366.9 906.5,368.6C908.9,370.3 911.0,371.0 913.2,370.7C915.4,370.5 917.5,369.8 919.9,367.2C922.4,364.6 924.8,359.6 928.0,355.1C931.1,350.7 935.2,344.8 938.7,340.3C942.3,335.9 945.9,331.8 949.5,328.2C953.1,324.7 956.7,321.1 960.3,318.8C963.8,316.6 967.4,315.7 971.0,314.8C974.6,313.9 978.9,315.0 981.8,313.5C984.7,311.9 986.3,310.1 988.5,305.4C990.7,300.7 992.8,293.1 995.2,285.2C997.7,277.4 1000.6,266.8 1003.3,258.3C1006.0,249.8 1008.7,240.8 1011.4,234.1C1014.0,227.4 1016.7,222.1 1019.4,218.0C1022.1,213.9 1025.0,210.8 1027.5,209.4C1030.0,207.9 1031.5,208.2 1034.2,209.4C1036.9,210.6 1040.3,214.3 1043.6,216.6C1047.0,219.0 1050.8,221.3 1054.4,223.4C1058.0,225.4 1061.1,227.4 1065.1,228.7C1069.2,230.1 1075.0,230.3 1078.6,231.4C1082.2,232.6 1084.4,233.2 1086.6,235.5C1088.9,237.7 1089.8,241.1 1092.0,244.9C1094.3,248.7 1097.4,254.3 1100.1,258.3C1102.8,262.4 1105.5,266.5 1108.2,269.1C1110.9,271.6 1113.5,273.2 1116.2,273.7C1118.9,274.1 1121.6,273.2 1124.3,271.8C1127.0,270.3 1129.7,268.4 1132.4,265.0C1135.1,261.7 1137.7,257.0 1140.4,251.6C1143.1,246.2 1146.0,238.2 1148.5,232.8C1151.0,227.4 1153.0,222.2 1155.2,219.3C1157.5,216.5 1159.5,215.8 1161.9,215.8C1164.4,215.8 1167.3,216.7 1170.0,219.3C1172.7,221.9 1176.4,228.9 1178.1,231.4C1179.7,233.9 1178.5,231.3 1180.0,234.4C1181.5,237.5 1184.4,244.2 1187.2,249.9C1190.0,255.7 1193.5,263.9 1196.7,269.1C1199.9,274.2 1203.1,277.2 1206.3,281.0C1209.5,284.8 1212.7,287.8 1215.8,291.8C1219.0,295.7 1222.2,300.7 1225.4,304.9C1228.6,309.1 1232.0,314.0 1235.0,316.9C1238.0,319.7 1240.5,321.7 1243.3,322.1C1246.1,322.5 1248.7,320.7 1251.7,319.2C1254.7,317.8 1258.1,315.3 1261.3,313.3C1264.4,311.3 1267.6,309.9 1270.8,307.3C1274.0,304.7 1277.2,302.1 1280.4,297.7C1283.6,293.4 1286.8,286.6 1289.9,281.0C1293.1,275.4 1296.3,269.3 1299.5,264.3C1302.7,259.3 1305.9,254.7 1309.1,251.1C1312.2,247.5 1315.8,244.6 1318.6,242.8C1321.4,240.9 1323.4,240.1 1325.8,239.9C1328.2,239.7 1330.6,240.1 1333.0,241.6C1335.3,243.0 1337.7,245.8 1340.1,248.7C1342.5,251.7 1344.9,255.3 1347.3,259.5C1349.7,263.7 1352.1,268.9 1354.5,273.8C1356.9,278.8 1359.4,284.6 1361.6,289.4C1363.8,294.2 1365.8,299.8 1367.6,302.5C1369.4,305.2 1370.6,305.6 1372.4,305.4C1374.2,305.2 1376.2,305.0 1378.4,301.3C1380.6,297.7 1383.3,291.2 1385.5,283.4C1387.7,275.6 1389.5,264.3 1391.5,254.7C1393.5,245.2 1395.5,234.8 1397.5,226.0C1399.5,217.3 1401.5,208.9 1403.5,202.1C1405.5,195.4 1407.4,190.0 1409.4,185.4C1411.4,180.8 1413.6,177.2 1415.4,174.7C1417.2,172.1 1419.4,170.7 1420.2,169.9" fill="none" stroke="#bd63cc" stroke-width="2.0" stroke-linecap="round"/>
</g>
<g clip-path="url(#cpMacd)">
<path d="M10.0,791.5L10.0,728.9L15.2,718.4L21.0,713.2L24.4,724.9L29.6,748.5L34.9,764.2L40.1,777.2L44.0,791.6L49.2,806.0L54.5,802.1L58.4,797.7L63.6,807.3L68.9,815.2L72.8,817.8L78.0,824.3L81.9,830.1L87.2,832.2L92.4,829.0L97.6,813.9L104.2,800.8L110.7,789.0L114.6,775.2L119.9,779.9L125.1,789.0L129.8,803.4L135.6,807.3L142.1,809.9L148.6,810.7L152.6,804.7L157.8,790.3L161.7,778.6L166.9,756.3L172.2,743.8L177.4,743.8L182.6,741.9L186.6,730.7L193.1,731.5L197.0,732.3L201.0,731.2L204.9,732.3L208.8,739.3L214.0,748.5L219.3,758.9L223.2,758.9L229.2,756.3L233.7,761.6L238.9,774.6L244.1,791.6L249.3,795.6L254.6,808.6L259.8,819.1L265.0,825.6L271.6,830.1L276.8,830.9L282.0,827.7L286.0,829.6L291.2,823.8L297.7,821.7L304.3,815.2L310.8,817.3L318.7,817.8L323.9,812.6L327.8,807.3L334.4,808.1L341.7,806.5L346.1,819.1L351.4,840.0L355.3,863.6L360.5,878.0L366.3,887.6L371.0,887.1L374.9,859.6L380.1,863.6L385.4,860.4L389.3,847.9L394.5,838.7L402.4,842.6L407.6,861.0L412.8,878.0L418.1,874.6L423.3,868.8L427.2,870.1L432.5,858.3L437.7,850.5L441.6,847.9L446.8,841.3L450.8,838.7L456.0,824.3L459.9,820.4L465.1,817.8L470.4,815.2L475.6,804.7L479.5,795.6L483.9,787.2L493.1,779.9L498.3,786.4L503.5,798.2L511.4,809.9L516.6,803.9L521.9,808.6L527.1,809.4L532.3,806.0L536.2,806.5L540.2,820.4L545.4,830.9L549.8,841.3L554.6,830.3L559.8,830.9L563.7,819.1L568.9,803.9L574.2,796.1L578.1,790.3L587.2,785.1L592.5,780.6L599.0,777.8L606.9,774.1L612.1,766.8L616.0,743.2L621.3,726.2L626.5,714.5L631.7,706.6L635.6,703.5L639.6,704.8L644.8,704.8L650.0,709.2L654.0,712.6L660.5,710.5L664.4,710.0L668.3,714.5L673.6,723.6L678.3,730.9L686.6,730.9L691.9,713.2L697.1,702.7L701.0,694.1L706.3,690.4L711.5,694.9L716.7,695.6L723.3,702.7L728.5,709.2L735.0,717.9L739.0,714.5L744.2,716.3L749.4,715.0L753.4,706.6L758.1,698.0L762.5,705.3L767.7,713.2L774.3,717.1L779.5,720.5L783.4,724.9L788.7,736.7L793.9,751.1L799.1,764.2L804.4,773.3L809.6,777.2L814.8,781.2L820.1,786.4L824.0,800.3L829.2,801.3L834.4,798.2L838.4,795.0L842.3,779.9L847.5,767.3L852.8,764.2L858.0,773.3L864.5,779.9L871.1,785.1L877.6,786.4L882.8,792.4L890.7,798.2L897.2,808.6L904.3,820.9L909.0,812.6L915.5,799.5L922.1,789.0L928.6,783.0L933.8,778.6L937.8,773.8L941.7,773.3L946.9,777.8L950.8,772.8L956.5,766.3L964.4,768.1L970.9,766.0L977.5,768.1L985.3,761.0L989.2,745.9L993.7,725.7L999.7,713.2L1004.9,702.7L1008.9,696.7L1014.1,699.6L1021.9,701.9L1028.5,710.5L1035.0,720.5L1041.6,731.5L1045.5,729.6L1050.7,733.3L1057.2,740.1L1065.1,750.6L1070.3,751.1L1078.2,758.4L1084.7,765.5L1089.9,775.9L1093.9,787.7L1097.8,802.1L1103.0,806.5L1108.3,806.8L1113.5,809.2L1117.4,807.3L1122.6,798.2L1129.2,794.3L1134.4,782.5L1141.0,775.9L1146.2,766.8L1150.1,753.7L1155.3,760.2L1161.9,769.4L1168.4,775.9L1174.4,784.3L1178.9,799.5L1184.1,808.6L1188.0,816.0L1193.3,808.6L1198.5,807.9L1202.4,813.9L1207.7,825.6L1212.9,829.6L1216.8,832.7L1220.7,830.3L1224.7,839.5L1231.2,845.8L1235.1,849.2L1240.4,847.4L1245.6,837.4L1250.8,829.0L1256.0,824.9L1261.3,822.2L1266.5,820.4L1271.7,812.6L1278.3,806.0L1282.2,795.6L1286.1,782.5L1291.4,773.3L1296.6,767.3L1305.7,763.6L1312.3,758.9L1320.9,755.0L1326.7,760.2L1333.2,764.2L1337.1,770.7L1342.4,782.5L1346.3,789.0L1350.2,795.6L1355.4,808.6L1359.4,816.0L1363.3,821.7L1368.5,817.8L1373.8,807.3L1379.0,791.6L1384.2,769.4L1389.5,745.9L1394.7,731.5L1399.9,721.0L1405.9,710.5L1410.4,715.8L1415.6,715.0L1420.1,719.2L1420.1,791.5Z" fill="#63646a" stroke="#63646a" stroke-width="0.6" stroke-linejoin="round"/>
<rect x="11" y="790.9" width="1722.5" height="1.2" fill="#ffffff"/>
<path d="M10.0,732.8C12.0,731.5 18.9,725.6 21.8,724.9C24.6,724.3 25.0,726.5 27.0,728.9C29.0,731.3 31.4,735.8 33.5,739.3C35.7,742.8 37.5,744.1 40.1,749.8C42.7,755.4 46.8,768.3 49.2,773.3C51.6,778.3 52.7,777.9 54.5,779.9C56.2,781.8 57.7,782.7 59.7,785.1C61.7,787.5 63.6,791.0 66.2,794.3C68.9,797.5 72.6,801.4 75.4,804.7C78.2,808.0 81.1,811.6 83.2,813.9C85.4,816.2 86.7,817.5 88.5,818.6C90.2,819.7 91.5,820.8 93.7,820.4C95.9,820.1 98.7,818.7 101.6,816.5C104.4,814.3 108.3,810.4 110.7,807.3C113.1,804.3 114.4,800.4 115.9,798.2C117.5,796.0 118.3,795.0 119.9,794.3C121.4,793.5 122.9,792.8 125.1,793.5C127.3,794.1 130.3,796.7 132.9,798.2C135.6,799.6 138.2,800.9 140.8,802.1C143.4,803.3 146.7,805.1 148.6,805.5C150.6,805.9 151.0,805.5 152.6,804.7C154.1,803.9 156.0,802.4 157.8,800.8C159.5,799.2 161.3,798.1 163.0,795.0C164.8,792.0 166.5,786.3 168.3,782.5C170.0,778.6 171.3,775.5 173.5,772.0C175.7,768.5 179.2,764.8 181.3,761.6C183.5,758.3 184.6,755.0 186.6,752.4C188.5,749.8 190.7,747.9 193.1,745.9C195.5,743.8 198.6,741.3 201.0,740.1C203.4,738.9 205.1,738.5 207.5,738.8C209.9,739.1 212.9,740.4 215.3,741.9C217.7,743.5 219.0,746.1 221.9,748.0C224.7,749.8 229.9,751.6 232.3,753.2C234.7,754.8 234.7,755.6 236.3,757.6C237.8,759.7 239.5,762.9 241.5,765.5C243.5,768.1 246.1,770.5 248.0,773.3C250.0,776.2 251.3,779.0 253.3,782.5C255.2,786.0 257.6,790.5 259.8,794.3C262.0,798.0 264.4,801.9 266.3,804.7C268.3,807.5 269.4,809.1 271.6,811.3C273.8,813.4 276.8,816.0 279.4,817.8C282.0,819.5 284.7,821.0 287.3,821.7C289.9,822.5 292.1,822.6 295.1,822.2C298.2,821.9 301.2,820.3 305.6,819.6C309.9,819.0 316.9,819.3 321.3,818.3C325.6,817.4 328.3,815.1 331.7,813.9C335.2,812.6 339.6,810.7 342.2,810.7C344.8,810.7 345.7,812.3 347.4,813.9C349.2,815.5 350.9,817.1 352.7,820.4C354.4,823.7 355.9,828.7 357.9,833.5C359.9,838.3 362.3,844.5 364.4,849.2C366.6,853.9 368.6,859.6 371.0,861.7C373.4,863.8 376.4,861.8 378.8,861.7C381.2,861.7 383.0,862.7 385.4,861.5C387.8,860.3 390.8,856.3 393.2,854.4C395.6,852.5 397.8,851.0 399.8,850.0C401.7,849.0 402.8,847.2 405.0,848.4C407.2,849.6 410.2,854.7 412.8,857.0C415.4,859.3 418.1,861.0 420.7,862.3C423.3,863.6 425.9,864.9 428.5,864.9C431.1,864.9 433.8,863.7 436.4,862.3C439.0,860.8 441.6,858.3 444.2,856.2C446.8,854.2 449.5,852.9 452.1,850.0C454.7,847.0 457.3,841.9 459.9,838.7C462.5,835.5 465.1,833.5 467.8,830.9C470.4,828.3 473.6,825.8 475.6,823.0C477.7,820.3 478.2,817.2 480.0,814.4C481.8,811.6 484.4,808.9 486.5,806.0C488.7,803.2 491.1,799.3 493.1,797.4C495.0,795.5 496.6,795.1 498.3,794.8C500.1,794.5 501.4,794.7 503.5,795.6C505.7,796.4 508.8,798.9 511.4,800.0C514.0,801.1 516.6,801.4 519.2,802.1C521.9,802.8 524.3,803.6 527.1,804.2C529.9,804.8 533.8,804.5 536.2,805.5C538.6,806.5 539.3,807.5 541.5,809.9C543.7,812.4 546.9,818.1 549.3,820.4C551.7,822.7 553.9,822.8 555.9,823.5C557.8,824.3 559.1,825.4 561.1,824.9C563.1,824.3 565.2,822.5 567.6,820.4C570.0,818.4 572.9,815.4 575.5,812.6C578.1,809.7 580.7,806.1 583.3,803.4C585.9,800.7 588.8,798.6 591.2,796.3C593.6,794.1 595.3,791.7 597.7,789.8C600.1,787.9 603.2,786.8 605.6,785.1C608.0,783.4 609.9,783.4 612.1,779.9C614.3,776.4 616.2,769.8 618.6,764.2C621.0,758.5 623.9,751.5 626.5,745.9C629.1,740.2 631.7,734.3 634.3,730.2C636.9,726.0 639.6,723.3 642.2,721.0C644.8,718.7 647.2,717.3 650.0,716.3C652.9,715.3 656.6,715.4 659.2,715.0C661.8,714.6 663.5,713.6 665.7,713.7C667.9,713.8 669.9,714.6 672.3,715.8C674.7,717.0 677.5,719.5 680.1,721.0C682.7,722.5 685.1,725.4 688.0,724.9C690.8,724.5 694.3,721.2 697.1,718.4C699.9,715.6 702.3,710.5 705.0,707.9C707.6,705.4 710.4,704.3 712.8,703.2C715.2,702.1 716.7,701.3 719.3,701.4C722.0,701.4 725.7,702.4 728.5,703.5C731.3,704.6 733.7,706.8 736.3,707.9C739.0,709.1 741.8,709.9 744.2,710.5C746.6,711.2 748.6,712.2 750.7,711.9C752.9,711.5 754.9,709.0 757.3,708.5C759.7,707.9 762.3,708.0 765.1,708.5C768.0,708.9 771.4,709.9 774.3,711.1C777.1,712.2 779.5,713.2 782.1,715.3C784.7,717.3 787.4,719.8 790.0,723.6C792.6,727.4 795.2,733.2 797.8,738.0C800.4,742.8 803.1,748.5 805.7,752.4C808.3,756.3 811.1,758.7 813.5,761.6C815.9,764.4 818.1,766.7 820.1,769.4C822.0,772.1 823.3,775.5 825.3,778.0C827.2,780.6 829.6,782.9 831.8,784.6C834.0,786.3 836.2,788.4 838.4,788.2C840.5,788.1 842.5,785.7 844.9,783.8C847.3,781.9 850.4,778.1 852.8,776.7C855.1,775.3 856.9,775.2 859.3,775.4C861.7,775.6 864.3,776.8 867.1,777.8C870.0,778.7 873.2,779.8 876.3,781.2C879.3,782.5 882.2,783.6 885.4,785.9C888.7,788.2 892.6,792.0 895.9,795.0C899.2,798.0 902.5,802.2 905.1,803.9C907.7,805.7 909.2,805.8 911.6,805.5C914.0,805.2 916.4,804.2 919.5,802.1C922.5,800.0 926.4,796.0 929.9,792.9C933.4,789.9 936.9,785.8 940.4,783.8C943.9,781.7 947.5,782.2 950.8,780.6C954.2,779.1 957.1,776.3 960.5,774.6C963.8,773.0 967.7,771.6 970.9,770.7C974.2,769.8 977.0,770.7 980.1,769.4C983.1,768.1 986.4,766.6 989.2,762.9C992.1,759.2 994.5,752.2 997.1,747.2C999.7,742.2 1002.3,737.4 1004.9,732.8C1007.5,728.2 1010.2,723.1 1012.8,719.7C1015.4,716.3 1018.0,714.1 1020.6,712.6C1023.2,711.2 1025.9,710.7 1028.5,711.1C1031.1,711.5 1033.7,713.3 1036.3,715.0C1038.9,716.6 1041.1,718.9 1044.2,721.0C1047.2,723.1 1051.1,724.8 1054.6,727.5C1058.1,730.3 1061.6,734.7 1065.1,737.5C1068.6,740.3 1072.3,741.8 1075.6,744.6C1078.8,747.3 1081.9,750.4 1084.7,753.7C1087.5,757.0 1090.2,760.2 1092.6,764.2C1095.0,768.1 1096.7,773.3 1099.1,777.2C1101.5,781.2 1103.9,784.4 1106.9,787.7C1110.0,791.0 1114.4,795.2 1117.4,796.9C1120.5,798.5 1122.6,798.0 1125.3,797.7C1127.9,797.3 1130.7,796.5 1133.1,795.0C1135.5,793.6 1137.5,791.1 1139.6,789.0C1141.8,786.9 1144.2,784.9 1146.2,782.5C1148.1,780.1 1149.2,776.6 1151.4,774.6C1153.6,772.7 1156.6,771.1 1159.3,770.7C1161.9,770.3 1164.5,770.9 1167.1,772.0C1169.7,773.1 1172.3,774.6 1175.0,777.2C1177.6,779.9 1180.6,784.7 1182.8,787.7C1185.0,790.7 1185.9,793.1 1188.0,795.0C1190.2,797.0 1193.7,798.2 1195.9,799.5C1198.1,800.7 1198.9,800.7 1201.1,802.6C1203.3,804.6 1206.1,808.4 1209.0,811.3C1211.8,814.1 1215.1,816.9 1218.1,819.6C1221.2,822.3 1224.4,824.9 1227.3,827.5C1230.1,830.1 1232.5,833.5 1235.1,835.3C1237.7,837.1 1240.4,838.1 1243.0,838.2C1245.6,838.3 1248.0,837.3 1250.8,836.1C1253.7,834.9 1256.9,832.5 1260.0,830.9C1263.0,829.2 1266.3,828.0 1269.1,826.2C1272.0,824.3 1274.6,821.9 1277.0,819.6C1279.4,817.4 1281.3,815.7 1283.5,812.6C1285.7,809.4 1287.7,804.9 1290.1,800.8C1292.5,796.6 1294.9,791.9 1297.9,787.7C1301.0,783.6 1304.9,779.3 1308.4,775.9C1311.9,772.5 1315.8,769.3 1318.8,767.3C1321.9,765.3 1324.1,764.7 1326.7,764.2C1329.3,763.6 1331.9,763.1 1334.5,764.2C1337.1,765.3 1339.8,768.3 1342.4,770.7C1345.0,773.1 1347.6,775.1 1350.2,778.6C1352.8,782.0 1355.7,787.9 1358.1,791.6C1360.5,795.3 1362.4,798.6 1364.6,800.8C1366.8,803.0 1369.0,804.3 1371.1,804.7C1373.3,805.1 1375.5,804.9 1377.7,803.4C1379.9,801.9 1381.8,800.1 1384.2,795.6C1386.6,791.0 1389.5,782.5 1392.1,775.9C1394.7,769.4 1397.3,762.4 1399.9,756.3C1402.5,750.2 1405.1,743.5 1407.8,739.3C1410.4,735.2 1413.6,733.2 1415.6,731.5C1417.7,729.7 1419.3,729.3 1420.1,728.9" fill="none" stroke="#e23142" stroke-width="1.1"/>
</g>
<text x="18.0" y="686.5" font-size="12.4" fill="#bcbcc0" textLength="104.5" lengthAdjust="spacingAndGlyphs" >MACD (9, 17, close)</text>
<rect x="11" y="665.9" width="1813" height="1.2" fill="#f6f6f6"/>
<rect x="1733.0" y="28" width="1" height="915" fill="#6c6c6c"/>
<rect x="11" y="908.0" width="1813" height="1" fill="#6c6c6c"/>
<g clip-path="url(#cpAxis)">
<text x="1744.2" y="42.9" font-size="14.8" fill="#b9b9bd" textLength="69.8" lengthAdjust="spacingAndGlyphs" >140,000.0</text>
<text x="1744.2" y="87.6" font-size="14.8" fill="#b9b9bd" textLength="69.8" lengthAdjust="spacingAndGlyphs" >135,000.0</text>
<text x="1744.2" y="132.3" font-size="14.8" fill="#b9b9bd" textLength="69.8" lengthAdjust="spacingAndGlyphs" >130,000.0</text>
<text x="1744.2" y="177.0" font-size="14.8" fill="#b9b9bd" textLength="69.8" lengthAdjust="spacingAndGlyphs" >125,000.0</text>
<text x="1744.2" y="221.8" font-size="14.8" fill="#b9b9bd" textLength="69.8" lengthAdjust="spacingAndGlyphs" >120,000.0</text>
<text x="1744.2" y="266.5" font-size="14.8" fill="#b9b9bd" textLength="69.8" lengthAdjust="spacingAndGlyphs" >115,000.0</text>
<text x="1744.2" y="311.2" font-size="14.8" fill="#b9b9bd" textLength="69.8" lengthAdjust="spacingAndGlyphs" >110,000.0</text>
<text x="1744.2" y="356.0" font-size="14.8" fill="#b9b9bd" textLength="69.8" lengthAdjust="spacingAndGlyphs" >105,000.0</text>
<text x="1744.2" y="400.7" font-size="14.8" fill="#b9b9bd" textLength="69.8" lengthAdjust="spacingAndGlyphs" >100,000.0</text>
<text x="1744.2" y="445.4" font-size="14.8" fill="#b9b9bd" textLength="62.6" lengthAdjust="spacingAndGlyphs" >95,000.0</text>
<text x="1744.2" y="490.1" font-size="14.8" fill="#b9b9bd" textLength="62.6" lengthAdjust="spacingAndGlyphs" >90,000.0</text>
<text x="1744.2" y="534.9" font-size="14.8" fill="#b9b9bd" textLength="62.6" lengthAdjust="spacingAndGlyphs" >85,000.0</text>
<text x="1744.2" y="579.6" font-size="14.8" fill="#b9b9bd" textLength="62.6" lengthAdjust="spacingAndGlyphs" >80,000.0</text>
<text x="1744.2" y="624.3" font-size="14.8" fill="#b9b9bd" textLength="62.6" lengthAdjust="spacingAndGlyphs" >75,000.0</text>
<text x="1744.2" y="669.0" font-size="14.8" fill="#b9b9bd" textLength="62.6" lengthAdjust="spacingAndGlyphs" >70,000.0</text>
</g>
<text x="1744.2" y="725.3" font-size="14.8" fill="#b9b9bd" textLength="53.3" lengthAdjust="spacingAndGlyphs" >2,000.0</text>
<text x="1744.2" y="795.2" font-size="14.8" fill="#b9b9bd" textLength="22.5" lengthAdjust="spacingAndGlyphs" >0.0</text>
<text x="1744.2" y="862.3" font-size="14.8" fill="#b9b9bd" textLength="61.5" lengthAdjust="spacingAndGlyphs" >−2,000.0</text>
<rect x="1734.0" y="309" width="86.2" height="87" fill="#fde93b"/>
<path d="M1734.0,152.9h84.7a2.5,2.5 0 0 1 2.5,2.5v18.2a2.5,2.5 0 0 1 -2.5,2.5h-84.7z" fill="#fde93b"/><text x="1744.2" y="168.9" font-size="14.8" fill="#15151a" textLength="69.2" lengthAdjust="spacingAndGlyphs" >126,000.0</text>
<path d="M1734.0,252.9h84.7a2.5,2.5 0 0 1 2.5,2.5v18.2a2.5,2.5 0 0 1 -2.5,2.5h-84.7z" fill="#fde93b"/><text x="1744.2" y="268.9" font-size="14.8" fill="#15151a" textLength="69.2" lengthAdjust="spacingAndGlyphs" >114,800.0</text>
<path d="M1734.0,306.9h84.7a2.5,2.5 0 0 1 2.5,2.5v18.2a2.5,2.5 0 0 1 -2.5,2.5h-84.7z" fill="#fde93b"/><text x="1744.2" y="322.9" font-size="14.8" fill="#15151a" textLength="69.2" lengthAdjust="spacingAndGlyphs" >108,750.0</text>
<path d="M1734.0,329.6h84.7a2.5,2.5 0 0 1 2.5,2.5v18.2a2.5,2.5 0 0 1 -2.5,2.5h-84.7z" fill="#fde93b"/><text x="1744.2" y="345.6" font-size="14.8" fill="#15151a" textLength="69.2" lengthAdjust="spacingAndGlyphs" >107,400.0</text>
<path d="M1734.0,352.3h84.7a2.5,2.5 0 0 1 2.5,2.5v18.2a2.5,2.5 0 0 1 -2.5,2.5h-84.7z" fill="#fde93b"/><text x="1744.2" y="368.3" font-size="14.8" fill="#15151a" textLength="69.2" lengthAdjust="spacingAndGlyphs" >105,000.0</text>
<path d="M1734.0,374.9h84.7a2.5,2.5 0 0 1 2.5,2.5v18.2a2.5,2.5 0 0 1 -2.5,2.5h-84.7z" fill="#fde93b"/><text x="1744.2" y="390.9" font-size="14.8" fill="#15151a" textLength="69.2" lengthAdjust="spacingAndGlyphs" >101,500.0</text>
<path d="M1734.0,402.9h76.3a2.5,2.5 0 0 1 2.5,2.5v18.2a2.5,2.5 0 0 1 -2.5,2.5h-76.3z" fill="#fde93b"/><text x="1744.2" y="418.9" font-size="14.8" fill="#15151a" textLength="62.4" lengthAdjust="spacingAndGlyphs" >98,000.0</text>
<path d="M1734.0,443.8h76.3a2.5,2.5 0 0 1 2.5,2.5v18.2a2.5,2.5 0 0 1 -2.5,2.5h-76.3z" fill="#fde93b"/><text x="1744.2" y="459.8" font-size="14.8" fill="#15151a" textLength="62.4" lengthAdjust="spacingAndGlyphs" >93,500.0</text>
<path d="M1734.0,483.8h76.3a2.5,2.5 0 0 1 2.5,2.5v18.2a2.5,2.5 0 0 1 -2.5,2.5h-76.3z" fill="#fde93b"/><text x="1744.2" y="499.8" font-size="14.8" fill="#15151a" textLength="62.4" lengthAdjust="spacingAndGlyphs" >89,000.0</text>
<path d="M1734.0,611.9h76.3a2.5,2.5 0 0 1 2.5,2.5v18.2a2.5,2.5 0 0 1 -2.5,2.5h-76.3z" fill="#fde93b"/><text x="1744.2" y="627.9" font-size="14.8" fill="#15151a" textLength="62.4" lengthAdjust="spacingAndGlyphs" >74,688.2</text>
<path d="M1734.0,187.9h84.7a2.5,2.5 0 0 1 2.5,2.5v18.2a2.5,2.5 0 0 1 -2.5,2.5h-84.7z" fill="#47a94e"/><text x="1744.2" y="203.9" font-size="14.8" fill="#ffffff" textLength="67.8" lengthAdjust="spacingAndGlyphs" stroke="#ffffff" stroke-width="0.45">122,084.1</text>
<text x="73.7" y="930.3" font-size="14.8" fill="#c2c2c6" textLength="36.1" lengthAdjust="spacingAndGlyphs" font-weight="bold" >2025</text>
<text x="226.1" y="930.3" font-size="14.8" fill="#c2c2c6" textLength="23.6" lengthAdjust="spacingAndGlyphs" >2月</text>
<text x="358.5" y="930.3" font-size="14.8" fill="#c2c2c6" textLength="23.6" lengthAdjust="spacingAndGlyphs" >3月</text>
<text x="504.6" y="930.3" font-size="14.8" fill="#c2c2c6" textLength="23.6" lengthAdjust="spacingAndGlyphs" >4月</text>
<text x="646.7" y="930.3" font-size="14.8" fill="#c2c2c6" textLength="23.6" lengthAdjust="spacingAndGlyphs" >5月</text>
<text x="793.1" y="930.3" font-size="14.8" fill="#c2c2c6" textLength="23.6" lengthAdjust="spacingAndGlyphs" >6月</text>
<text x="934.5" y="930.3" font-size="14.8" fill="#c2c2c6" textLength="23.6" lengthAdjust="spacingAndGlyphs" >7月</text>
<text x="1081.0" y="930.3" font-size="14.8" fill="#c2c2c6" textLength="23.6" lengthAdjust="spacingAndGlyphs" >8月</text>
<text x="1227.2" y="930.3" font-size="14.8" fill="#c2c2c6" textLength="23.6" lengthAdjust="spacingAndGlyphs" >9月</text>
<text x="1365.6" y="930.3" font-size="14.8" fill="#c2c2c6" textLength="30.8" lengthAdjust="spacingAndGlyphs" >10月</text>
<text x="1512.1" y="930.3" font-size="14.8" fill="#c2c2c6" textLength="30.8" lengthAdjust="spacingAndGlyphs" >11月</text>
<text x="1654.6" y="930.3" font-size="14.8" fill="#c2c2c6" textLength="30.8" lengthAdjust="spacingAndGlyphs" >12月</text>
<g fill="#dedede">
<path d="M12.3,965.8h11.9v15.1h-7.3v-8.2h-4.6z"/>
<circle cx="29.2" cy="969.2" r="3.4"/>
<path d="M34.5,965.8h7.6l-6.3,15.1h-7.6z"/>
</g>
<text x="49.0" y="980.9" font-size="21.8" fill="#dedede" textLength="120.5" lengthAdjust="spacingAndGlyphs" font-weight="bold" >TradingView</text>
</svg></body></html>
